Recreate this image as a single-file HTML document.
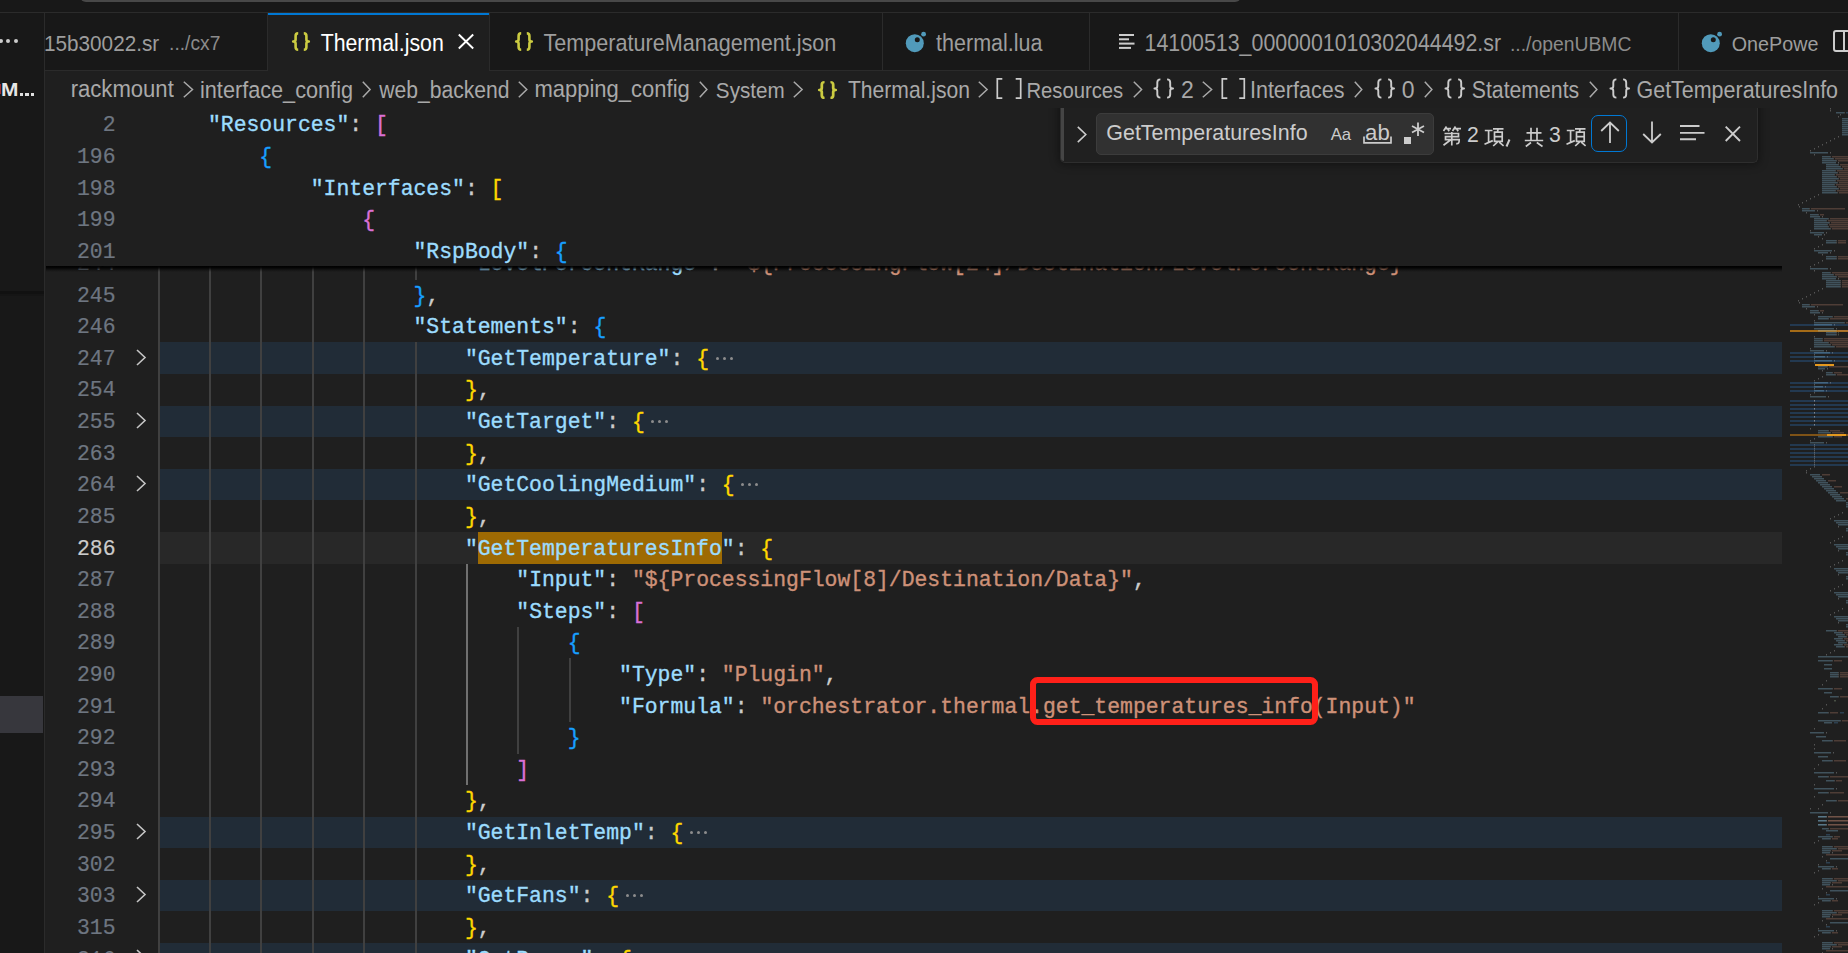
<!DOCTYPE html><html><head><meta charset="utf-8"><title>Thermal.json</title><style>
*{margin:0;padding:0;box-sizing:border-box}
html,body{width:1848px;height:953px;overflow:hidden;background:#1f1f1f}
body{position:relative;font-family:"Liberation Sans",sans-serif}
.a{position:absolute}
svg.a{overflow:visible}
.t{position:absolute;white-space:pre;font-family:"Liberation Sans",sans-serif}
.c{position:absolute;white-space:pre;font-family:"Liberation Mono",monospace;font-size:21.413px;-webkit-text-stroke:0.35px currentColor}
.ln{position:absolute;white-space:pre;font-family:"Liberation Mono",monospace;font-size:21.413px;text-align:right;width:60px;-webkit-text-stroke:0.2px currentColor}
</style></head><body>
<div class="a" style="left:0px;top:0px;width:1848px;height:12px;background:#181818;"></div>
<div class="a" style="left:80px;top:-20px;width:1161px;height:22px;background:#484848;border-radius:6px"></div>
<div class="a" style="left:0px;top:12px;width:1848px;height:1px;background:#2b2b2b;"></div>
<div class="a" style="left:0px;top:13px;width:44px;height:940px;background:#181818;"></div>
<div class="a" style="left:44px;top:13px;width:1px;height:940px;background:#2b2b2b;"></div>
<div class="a" style="left:-1.5px;top:39.4px;width:4px;height:4px;background:#cccccc;border-radius:2px"></div>
<div class="a" style="left:5.5px;top:39.4px;width:4px;height:4px;background:#cccccc;border-radius:2px"></div>
<div class="a" style="left:14px;top:39.4px;width:4px;height:4px;background:#cccccc;border-radius:2px"></div>
<div class="t" style="left:1.20px;top:70.06px;font-size:18.000px;line-height:40px;color:#e6e6e6;font-weight:bold;transform:scaleX(1.16);transform-origin:0 0;">M</div>
<div class="a" style="left:19.6px;top:92.6px;width:3.3px;height:3.4px;background:#e0e0e0;"></div>
<div class="a" style="left:25.3px;top:92.6px;width:3.3px;height:3.4px;background:#e0e0e0;"></div>
<div class="a" style="left:31.0px;top:92.6px;width:3.3px;height:3.4px;background:#e0e0e0;"></div>
<div class="a" style="left:0px;top:84px;width:1px;height:10px;background:#a02828;"></div>
<div class="a" style="left:0px;top:291px;width:44px;height:3px;background:#111111;"></div>
<div class="a" style="left:0px;top:294px;width:44px;height:2px;background:#151515;"></div>
<div class="a" style="left:0px;top:696px;width:43px;height:37px;background:#37373d;"></div>
<div class="a" style="left:45px;top:13px;width:1803px;height:57px;background:#181818;"></div>
<div class="a" style="left:45px;top:70px;width:1803px;height:1px;background:#2b2b2b;"></div>
<div class="a" style="left:268px;top:13px;width:221px;height:58px;background:#1f1f1f;"></div>
<div class="a" style="left:268px;top:13px;width:221px;height:2px;background:#0078d4;"></div>
<div class="a" style="left:267px;top:13px;width:1px;height:57px;background:#2b2b2b;"></div>
<div class="a" style="left:489px;top:13px;width:1px;height:57px;background:#2b2b2b;"></div>
<div class="a" style="left:882px;top:13px;width:1px;height:57px;background:#2b2b2b;"></div>
<div class="a" style="left:1089px;top:13px;width:1px;height:57px;background:#2b2b2b;"></div>
<div class="a" style="left:1678px;top:13px;width:1px;height:57px;background:#2b2b2b;"></div>
<div class="t" style="left:44.05px;top:23.82px;font-size:20.712px;line-height:40px;color:#9d9d9d;transform:scaleY(1.09);transform-origin:0 27.18px;">15b30022.sr</div>
<div class="t" style="left:169.07px;top:24.33px;font-size:19.249px;line-height:40px;color:#8b8b8b;transform:scaleY(1.09);transform-origin:0 26.67px;">.../cx7</div>
<svg class="a" style="left:291.5px;top:32px" width="18" height="19" viewBox="0 0 18 19" preserveAspectRatio="none"><path d="M6.2 1.2 C4.2 1.2 3.6 2.2 3.6 4 L3.6 7.4 C3.6 8.6 2.9 9.5 1.2 9.5 C2.9 9.5 3.6 10.4 3.6 11.6 L3.6 15 C3.6 16.8 4.2 17.8 6.2 17.8" fill="none" stroke="#cbcb41" stroke-width="2.6" stroke-linejoin="round"/><path d="M11.8 1.2 C13.8 1.2 14.4 2.2 14.4 4 L14.4 7.4 C14.4 8.6 15.1 9.5 16.8 9.5 C15.1 9.5 14.4 10.4 14.4 11.6 L14.4 15 C14.4 16.8 13.8 17.8 11.8 17.8" fill="none" stroke="#cbcb41" stroke-width="2.6" stroke-linejoin="round"/></svg>
<div class="t" style="left:320.67px;top:23.62px;font-size:21.301px;line-height:40px;color:#ffffff;transform:scaleY(1.09);transform-origin:0 27.38px;">Thermal.json</div>
<svg class="a" style="left:458px;top:34px" width="16" height="15" viewBox="0 0 16 15"><path d="M0.8 0.5 L15.2 14.5 M15.2 0.5 L0.8 14.5" stroke="#ffffff" stroke-width="1.9"/></svg>
<svg class="a" style="left:514.5px;top:32px" width="18" height="19" viewBox="0 0 18 19" preserveAspectRatio="none"><path d="M6.2 1.2 C4.2 1.2 3.6 2.2 3.6 4 L3.6 7.4 C3.6 8.6 2.9 9.5 1.2 9.5 C2.9 9.5 3.6 10.4 3.6 11.6 L3.6 15 C3.6 16.8 4.2 17.8 6.2 17.8" fill="none" stroke="#cbcb41" stroke-width="2.6" stroke-linejoin="round"/><path d="M11.8 1.2 C13.8 1.2 14.4 2.2 14.4 4 L14.4 7.4 C14.4 8.6 15.1 9.5 16.8 9.5 C15.1 9.5 14.4 10.4 14.4 11.6 L14.4 15 C14.4 16.8 13.8 17.8 11.8 17.8" fill="none" stroke="#cbcb41" stroke-width="2.6" stroke-linejoin="round"/></svg>
<div class="t" style="left:543.57px;top:23.52px;font-size:21.588px;line-height:40px;color:#9d9d9d;transform:scaleY(1.09);transform-origin:0 27.48px;">TemperatureManagement.json</div>
<svg class="a" style="left:904.5px;top:30.5px" width="22" height="22" viewBox="0 0 22 22"><circle cx="9.8" cy="12.2" r="9" fill="#519aba"/><circle cx="12.3" cy="8.8" r="2.5" fill="#181818"/><circle cx="18.6" cy="3.2" r="2.4" fill="#519aba"/></svg>
<div class="t" style="left:936.08px;top:23.54px;font-size:21.518px;line-height:40px;color:#9d9d9d;transform:scaleY(1.09);transform-origin:0 27.46px;">thermal.lua</div>
<svg class="a" style="left:1119px;top:34px" width="16" height="16" viewBox="0 0 16 16"><g fill="#cccccc"><rect x="0" y="0" width="15" height="2"/><rect x="0" y="4.3" width="10" height="2"/><rect x="0" y="8.6" width="15.5" height="2"/><rect x="0" y="12.9" width="12" height="2"/></g></svg>
<div class="t" style="left:1144.50px;top:23.59px;font-size:21.386px;line-height:40px;color:#9d9d9d;transform:scaleY(1.09);transform-origin:0 27.41px;">14100513_0000001010302044492.sr</div>
<div class="t" style="left:1509.96px;top:24.30px;font-size:19.350px;line-height:40px;color:#8b8b8b;transform:scaleY(1.09);transform-origin:0 26.70px;">.../openUBMC</div>
<svg class="a" style="left:1701px;top:30.5px" width="22" height="22" viewBox="0 0 22 22"><circle cx="9.8" cy="12.2" r="9" fill="#519aba"/><circle cx="12.3" cy="8.8" r="2.5" fill="#181818"/><circle cx="18.6" cy="3.2" r="2.4" fill="#519aba"/></svg>
<div class="a" style="left:1680px;top:13px;width:138.5px;height:57px;overflow:hidden">
<div class="t" style="left:51.71px;top:11.16px;font-size:19.745px;line-height:40px;color:#9d9d9d;">OnePower</div>
</div>
<div class="a" style="left:1833.4px;top:30px;width:24px;height:21.5px;border:2px solid #cccccc;border-radius:3px"></div>
<div class="a" style="left:1843px;top:30px;width:2px;height:21.5px;background:#cccccc;"></div>
<div class="t" style="left:70.67px;top:70.44px;font-size:22.109px;line-height:40px;color:#a9a9a9;transform:scaleY(1.09);transform-origin:0 27.66px;">rackmount</div>
<svg class="a" style="left:183.4px;top:80.5px" width="10.400000000000006" height="17.0" viewBox="0 0 10.400000000000006 17.0"><path d="M0.8 0.8 L9.500000000000005 8.5 L0.8 16.2" fill="none" stroke="#a9a9a9" stroke-width="1.5"/></svg>
<div class="t" style="left:200.00px;top:70.58px;font-size:21.688px;line-height:40px;color:#a9a9a9;transform:scaleY(1.09);transform-origin:0 27.52px;">interface_config</div>
<svg class="a" style="left:362px;top:80.5px" width="9" height="17.0" viewBox="0 0 9 17.0"><path d="M0.8 0.8 L8.1 8.5 L0.8 16.2" fill="none" stroke="#a9a9a9" stroke-width="1.5"/></svg>
<div class="t" style="left:379.20px;top:70.78px;font-size:21.115px;line-height:40px;color:#a9a9a9;transform:scaleY(1.09);transform-origin:0 27.32px;">web_backend</div>
<svg class="a" style="left:517.9px;top:80.5px" width="9.700000000000045" height="17.0" viewBox="0 0 9.700000000000045 17.0"><path d="M0.8 0.8 L8.800000000000045 8.5 L0.8 16.2" fill="none" stroke="#a9a9a9" stroke-width="1.5"/></svg>
<div class="t" style="left:534.38px;top:70.47px;font-size:22.020px;line-height:40px;color:#a9a9a9;transform:scaleY(1.09);transform-origin:0 27.63px;">mapping_config</div>
<svg class="a" style="left:699px;top:80.5px" width="8.799999999999955" height="17.0" viewBox="0 0 8.799999999999955 17.0"><path d="M0.8 0.8 L7.899999999999954 8.5 L0.8 16.2" fill="none" stroke="#a9a9a9" stroke-width="1.5"/></svg>
<div class="t" style="left:715.87px;top:70.94px;font-size:20.652px;line-height:40px;color:#a9a9a9;transform:scaleY(1.09);transform-origin:0 27.16px;">System</div>
<svg class="a" style="left:793px;top:80.5px" width="10" height="17.0" viewBox="0 0 10 17.0"><path d="M0.8 0.8 L9.1 8.5 L0.8 16.2" fill="none" stroke="#a9a9a9" stroke-width="1.5"/></svg>
<svg class="a" style="left:818px;top:80.5px" width="19" height="18" viewBox="0 0 18 19" preserveAspectRatio="none"><path d="M6.2 1.2 C4.2 1.2 3.6 2.2 3.6 4 L3.6 7.4 C3.6 8.6 2.9 9.5 1.2 9.5 C2.9 9.5 3.6 10.4 3.6 11.6 L3.6 15 C3.6 16.8 4.2 17.8 6.2 17.8" fill="none" stroke="#cbcb41" stroke-width="2.6" stroke-linejoin="round"/><path d="M11.8 1.2 C13.8 1.2 14.4 2.2 14.4 4 L14.4 7.4 C14.4 8.6 15.1 9.5 16.8 9.5 C15.1 9.5 14.4 10.4 14.4 11.6 L14.4 15 C14.4 16.8 13.8 17.8 11.8 17.8" fill="none" stroke="#cbcb41" stroke-width="2.6" stroke-linejoin="round"/></svg>
<div class="t" style="left:847.98px;top:70.79px;font-size:21.107px;line-height:40px;color:#a9a9a9;transform:scaleY(1.09);transform-origin:0 27.31px;">Thermal.json</div>
<svg class="a" style="left:978px;top:80.5px" width="10" height="17.0" viewBox="0 0 10 17.0"><path d="M0.8 0.8 L9.1 8.5 L0.8 16.2" fill="none" stroke="#a9a9a9" stroke-width="1.5"/></svg>
<svg class="a" style="left:996px;top:78px" width="26" height="21" viewBox="0 0 26 21"><path d="M6.3 0.9 H1.3 V20.1 H6.3 M19.7 0.9 H24.7 V20.1 H19.7" fill="none" stroke="#cccccc" stroke-width="1.7"/></svg>
<div class="t" style="left:1026.38px;top:71.07px;font-size:20.278px;line-height:40px;color:#a9a9a9;transform:scaleY(1.09);transform-origin:0 27.03px;">Resources</div>
<svg class="a" style="left:1132.5px;top:80.5px" width="9.5" height="17.0" viewBox="0 0 9.5 17.0"><path d="M0.8 0.8 L8.6 8.5 L0.8 16.2" fill="none" stroke="#a9a9a9" stroke-width="1.5"/></svg>
<svg class="a" style="left:1152.5px;top:78px" width="21.5" height="21" viewBox="0 0 18 19" preserveAspectRatio="none"><path d="M6.2 1.2 C4.2 1.2 3.6 2.2 3.6 4 L3.6 7.4 C3.6 8.6 2.9 9.5 1.2 9.5 C2.9 9.5 3.6 10.4 3.6 11.6 L3.6 15 C3.6 16.8 4.2 17.8 6.2 17.8" fill="none" stroke="#cccccc" stroke-width="1.6" stroke-linejoin="round"/><path d="M11.8 1.2 C13.8 1.2 14.4 2.2 14.4 4 L14.4 7.4 C14.4 8.6 15.1 9.5 16.8 9.5 C15.1 9.5 14.4 10.4 14.4 11.6 L14.4 15 C14.4 16.8 13.8 17.8 11.8 17.8" fill="none" stroke="#cccccc" stroke-width="1.6" stroke-linejoin="round"/></svg>
<div class="t" style="left:1181.00px;top:70.33px;font-size:23.000px;line-height:40px;color:#a9a9a9;">2</div>
<svg class="a" style="left:1201.75px;top:80.5px" width="10.549999999999955" height="17.0" viewBox="0 0 10.549999999999955 17.0"><path d="M0.8 0.8 L9.649999999999954 8.5 L0.8 16.2" fill="none" stroke="#a9a9a9" stroke-width="1.5"/></svg>
<svg class="a" style="left:1221px;top:78px" width="24.59999999999991" height="21" viewBox="0 0 24.59999999999991 21"><path d="M6.3 0.9 H1.3 V20.1 H6.3 M18.29999999999991 0.9 H23.29999999999991 V20.1 H18.29999999999991" fill="none" stroke="#cccccc" stroke-width="1.7"/></svg>
<div class="t" style="left:1249.96px;top:70.64px;font-size:21.522px;line-height:40px;color:#a9a9a9;transform:scaleY(1.09);transform-origin:0 27.46px;">Interfaces</div>
<svg class="a" style="left:1354.3px;top:80.5px" width="8.700000000000045" height="17.0" viewBox="0 0 8.700000000000045 17.0"><path d="M0.8 0.8 L7.800000000000045 8.5 L0.8 16.2" fill="none" stroke="#a9a9a9" stroke-width="1.5"/></svg>
<svg class="a" style="left:1373.6px;top:78px" width="21.5" height="21" viewBox="0 0 18 19" preserveAspectRatio="none"><path d="M6.2 1.2 C4.2 1.2 3.6 2.2 3.6 4 L3.6 7.4 C3.6 8.6 2.9 9.5 1.2 9.5 C2.9 9.5 3.6 10.4 3.6 11.6 L3.6 15 C3.6 16.8 4.2 17.8 6.2 17.8" fill="none" stroke="#cccccc" stroke-width="1.6" stroke-linejoin="round"/><path d="M11.8 1.2 C13.8 1.2 14.4 2.2 14.4 4 L14.4 7.4 C14.4 8.6 15.1 9.5 16.8 9.5 C15.1 9.5 14.4 10.4 14.4 11.6 L14.4 15 C14.4 16.8 13.8 17.8 11.8 17.8" fill="none" stroke="#cccccc" stroke-width="1.6" stroke-linejoin="round"/></svg>
<div class="t" style="left:1401.80px;top:70.33px;font-size:23.000px;line-height:40px;color:#a9a9a9;">0</div>
<svg class="a" style="left:1424.4px;top:80.5px" width="8.799999999999955" height="17.0" viewBox="0 0 8.799999999999955 17.0"><path d="M0.8 0.8 L7.899999999999954 8.5 L0.8 16.2" fill="none" stroke="#a9a9a9" stroke-width="1.5"/></svg>
<svg class="a" style="left:1443.7px;top:78px" width="21.5" height="21" viewBox="0 0 18 19" preserveAspectRatio="none"><path d="M6.2 1.2 C4.2 1.2 3.6 2.2 3.6 4 L3.6 7.4 C3.6 8.6 2.9 9.5 1.2 9.5 C2.9 9.5 3.6 10.4 3.6 11.6 L3.6 15 C3.6 16.8 4.2 17.8 6.2 17.8" fill="none" stroke="#cccccc" stroke-width="1.6" stroke-linejoin="round"/><path d="M11.8 1.2 C13.8 1.2 14.4 2.2 14.4 4 L14.4 7.4 C14.4 8.6 15.1 9.5 16.8 9.5 C15.1 9.5 14.4 10.4 14.4 11.6 L14.4 15 C14.4 16.8 13.8 17.8 11.8 17.8" fill="none" stroke="#cccccc" stroke-width="1.6" stroke-linejoin="round"/></svg>
<div class="t" style="left:1471.74px;top:70.73px;font-size:21.265px;line-height:40px;color:#a9a9a9;transform:scaleY(1.09);transform-origin:0 27.37px;">Statements</div>
<svg class="a" style="left:1589.2px;top:80.5px" width="8.799999999999955" height="17.0" viewBox="0 0 8.799999999999955 17.0"><path d="M0.8 0.8 L7.899999999999954 8.5 L0.8 16.2" fill="none" stroke="#a9a9a9" stroke-width="1.5"/></svg>
<svg class="a" style="left:1608.5px;top:78px" width="21.5" height="21" viewBox="0 0 18 19" preserveAspectRatio="none"><path d="M6.2 1.2 C4.2 1.2 3.6 2.2 3.6 4 L3.6 7.4 C3.6 8.6 2.9 9.5 1.2 9.5 C2.9 9.5 3.6 10.4 3.6 11.6 L3.6 15 C3.6 16.8 4.2 17.8 6.2 17.8" fill="none" stroke="#cccccc" stroke-width="1.6" stroke-linejoin="round"/><path d="M11.8 1.2 C13.8 1.2 14.4 2.2 14.4 4 L14.4 7.4 C14.4 8.6 15.1 9.5 16.8 9.5 C15.1 9.5 14.4 10.4 14.4 11.6 L14.4 15 C14.4 16.8 13.8 17.8 11.8 17.8" fill="none" stroke="#cccccc" stroke-width="1.6" stroke-linejoin="round"/></svg>
<div class="t" style="left:1636.53px;top:70.66px;font-size:21.461px;line-height:40px;color:#a9a9a9;transform:scaleY(1.09);transform-origin:0 27.44px;">GetTemperaturesInfo</div>
<div class="a" style="left:158px;top:342.33px;width:1624px;height:31.61px;background:#212c37;"></div>
<div class="a" style="left:158px;top:405.56px;width:1624px;height:31.61px;background:#212c37;"></div>
<div class="a" style="left:158px;top:468.79px;width:1624px;height:31.61px;background:#212c37;"></div>
<div class="a" style="left:158px;top:532.02px;width:1624px;height:31.61px;background:#282828;"></div>
<div class="a" style="left:477.75px;top:532.02px;width:244.07px;height:31.61px;background:#9e6a03;"></div>
<div class="a" style="left:158px;top:816.55px;width:1624px;height:31.61px;background:#212c37;"></div>
<div class="a" style="left:158px;top:879.78px;width:1624px;height:31.61px;background:#212c37;"></div>
<div class="a" style="left:158px;top:943.01px;width:1624px;height:31.61px;background:#212c37;"></div>
<div class="a" style="left:157.60px;top:247.49px;width:2px;height:32.11px;background:#404040;"></div>
<div class="a" style="left:208.98px;top:247.49px;width:2px;height:32.11px;background:#404040;"></div>
<div class="a" style="left:260.37px;top:247.49px;width:2px;height:32.11px;background:#404040;"></div>
<div class="a" style="left:311.75px;top:247.49px;width:2px;height:32.11px;background:#404040;"></div>
<div class="a" style="left:363.14px;top:247.49px;width:2px;height:32.11px;background:#404040;"></div>
<div class="a" style="left:414.52px;top:247.49px;width:2px;height:32.11px;background:#404040;"></div>
<div class="a" style="left:157.60px;top:279.10px;width:2px;height:32.11px;background:#404040;"></div>
<div class="a" style="left:208.98px;top:279.10px;width:2px;height:32.11px;background:#404040;"></div>
<div class="a" style="left:260.37px;top:279.10px;width:2px;height:32.11px;background:#404040;"></div>
<div class="a" style="left:311.75px;top:279.10px;width:2px;height:32.11px;background:#404040;"></div>
<div class="a" style="left:363.14px;top:279.10px;width:2px;height:32.11px;background:#404040;"></div>
<div class="a" style="left:157.60px;top:310.72px;width:2px;height:32.11px;background:#404040;"></div>
<div class="a" style="left:208.98px;top:310.72px;width:2px;height:32.11px;background:#404040;"></div>
<div class="a" style="left:260.37px;top:310.72px;width:2px;height:32.11px;background:#404040;"></div>
<div class="a" style="left:311.75px;top:310.72px;width:2px;height:32.11px;background:#404040;"></div>
<div class="a" style="left:363.14px;top:310.72px;width:2px;height:32.11px;background:#404040;"></div>
<div class="a" style="left:157.60px;top:342.33px;width:2px;height:32.11px;background:#404040;"></div>
<div class="a" style="left:208.98px;top:342.33px;width:2px;height:32.11px;background:#404040;"></div>
<div class="a" style="left:260.37px;top:342.33px;width:2px;height:32.11px;background:#404040;"></div>
<div class="a" style="left:311.75px;top:342.33px;width:2px;height:32.11px;background:#404040;"></div>
<div class="a" style="left:363.14px;top:342.33px;width:2px;height:32.11px;background:#404040;"></div>
<div class="a" style="left:414.52px;top:342.33px;width:2px;height:32.11px;background:#404040;"></div>
<div class="a" style="left:157.60px;top:373.95px;width:2px;height:32.11px;background:#404040;"></div>
<div class="a" style="left:208.98px;top:373.95px;width:2px;height:32.11px;background:#404040;"></div>
<div class="a" style="left:260.37px;top:373.95px;width:2px;height:32.11px;background:#404040;"></div>
<div class="a" style="left:311.75px;top:373.95px;width:2px;height:32.11px;background:#404040;"></div>
<div class="a" style="left:363.14px;top:373.95px;width:2px;height:32.11px;background:#404040;"></div>
<div class="a" style="left:414.52px;top:373.95px;width:2px;height:32.11px;background:#404040;"></div>
<div class="a" style="left:157.60px;top:405.56px;width:2px;height:32.11px;background:#404040;"></div>
<div class="a" style="left:208.98px;top:405.56px;width:2px;height:32.11px;background:#404040;"></div>
<div class="a" style="left:260.37px;top:405.56px;width:2px;height:32.11px;background:#404040;"></div>
<div class="a" style="left:311.75px;top:405.56px;width:2px;height:32.11px;background:#404040;"></div>
<div class="a" style="left:363.14px;top:405.56px;width:2px;height:32.11px;background:#404040;"></div>
<div class="a" style="left:414.52px;top:405.56px;width:2px;height:32.11px;background:#404040;"></div>
<div class="a" style="left:157.60px;top:437.18px;width:2px;height:32.11px;background:#404040;"></div>
<div class="a" style="left:208.98px;top:437.18px;width:2px;height:32.11px;background:#404040;"></div>
<div class="a" style="left:260.37px;top:437.18px;width:2px;height:32.11px;background:#404040;"></div>
<div class="a" style="left:311.75px;top:437.18px;width:2px;height:32.11px;background:#404040;"></div>
<div class="a" style="left:363.14px;top:437.18px;width:2px;height:32.11px;background:#404040;"></div>
<div class="a" style="left:414.52px;top:437.18px;width:2px;height:32.11px;background:#404040;"></div>
<div class="a" style="left:157.60px;top:468.79px;width:2px;height:32.11px;background:#404040;"></div>
<div class="a" style="left:208.98px;top:468.79px;width:2px;height:32.11px;background:#404040;"></div>
<div class="a" style="left:260.37px;top:468.79px;width:2px;height:32.11px;background:#404040;"></div>
<div class="a" style="left:311.75px;top:468.79px;width:2px;height:32.11px;background:#404040;"></div>
<div class="a" style="left:363.14px;top:468.79px;width:2px;height:32.11px;background:#404040;"></div>
<div class="a" style="left:414.52px;top:468.79px;width:2px;height:32.11px;background:#404040;"></div>
<div class="a" style="left:157.60px;top:500.40px;width:2px;height:32.11px;background:#404040;"></div>
<div class="a" style="left:208.98px;top:500.40px;width:2px;height:32.11px;background:#404040;"></div>
<div class="a" style="left:260.37px;top:500.40px;width:2px;height:32.11px;background:#404040;"></div>
<div class="a" style="left:311.75px;top:500.40px;width:2px;height:32.11px;background:#404040;"></div>
<div class="a" style="left:363.14px;top:500.40px;width:2px;height:32.11px;background:#404040;"></div>
<div class="a" style="left:414.52px;top:500.40px;width:2px;height:32.11px;background:#404040;"></div>
<div class="a" style="left:157.60px;top:532.02px;width:2px;height:32.11px;background:#404040;"></div>
<div class="a" style="left:208.98px;top:532.02px;width:2px;height:32.11px;background:#404040;"></div>
<div class="a" style="left:260.37px;top:532.02px;width:2px;height:32.11px;background:#404040;"></div>
<div class="a" style="left:311.75px;top:532.02px;width:2px;height:32.11px;background:#404040;"></div>
<div class="a" style="left:363.14px;top:532.02px;width:2px;height:32.11px;background:#404040;"></div>
<div class="a" style="left:414.52px;top:532.02px;width:2px;height:32.11px;background:#404040;"></div>
<div class="a" style="left:157.60px;top:563.63px;width:2px;height:32.11px;background:#404040;"></div>
<div class="a" style="left:208.98px;top:563.63px;width:2px;height:32.11px;background:#404040;"></div>
<div class="a" style="left:260.37px;top:563.63px;width:2px;height:32.11px;background:#404040;"></div>
<div class="a" style="left:311.75px;top:563.63px;width:2px;height:32.11px;background:#404040;"></div>
<div class="a" style="left:363.14px;top:563.63px;width:2px;height:32.11px;background:#404040;"></div>
<div class="a" style="left:414.52px;top:563.63px;width:2px;height:32.11px;background:#404040;"></div>
<div class="a" style="left:465.90px;top:563.63px;width:2px;height:32.11px;background:#707070;"></div>
<div class="a" style="left:157.60px;top:595.25px;width:2px;height:32.11px;background:#404040;"></div>
<div class="a" style="left:208.98px;top:595.25px;width:2px;height:32.11px;background:#404040;"></div>
<div class="a" style="left:260.37px;top:595.25px;width:2px;height:32.11px;background:#404040;"></div>
<div class="a" style="left:311.75px;top:595.25px;width:2px;height:32.11px;background:#404040;"></div>
<div class="a" style="left:363.14px;top:595.25px;width:2px;height:32.11px;background:#404040;"></div>
<div class="a" style="left:414.52px;top:595.25px;width:2px;height:32.11px;background:#404040;"></div>
<div class="a" style="left:465.90px;top:595.25px;width:2px;height:32.11px;background:#707070;"></div>
<div class="a" style="left:157.60px;top:626.87px;width:2px;height:32.11px;background:#404040;"></div>
<div class="a" style="left:208.98px;top:626.87px;width:2px;height:32.11px;background:#404040;"></div>
<div class="a" style="left:260.37px;top:626.87px;width:2px;height:32.11px;background:#404040;"></div>
<div class="a" style="left:311.75px;top:626.87px;width:2px;height:32.11px;background:#404040;"></div>
<div class="a" style="left:363.14px;top:626.87px;width:2px;height:32.11px;background:#404040;"></div>
<div class="a" style="left:414.52px;top:626.87px;width:2px;height:32.11px;background:#404040;"></div>
<div class="a" style="left:465.90px;top:626.87px;width:2px;height:32.11px;background:#707070;"></div>
<div class="a" style="left:517.29px;top:626.87px;width:2px;height:32.11px;background:#404040;"></div>
<div class="a" style="left:157.60px;top:658.48px;width:2px;height:32.11px;background:#404040;"></div>
<div class="a" style="left:208.98px;top:658.48px;width:2px;height:32.11px;background:#404040;"></div>
<div class="a" style="left:260.37px;top:658.48px;width:2px;height:32.11px;background:#404040;"></div>
<div class="a" style="left:311.75px;top:658.48px;width:2px;height:32.11px;background:#404040;"></div>
<div class="a" style="left:363.14px;top:658.48px;width:2px;height:32.11px;background:#404040;"></div>
<div class="a" style="left:414.52px;top:658.48px;width:2px;height:32.11px;background:#404040;"></div>
<div class="a" style="left:465.90px;top:658.48px;width:2px;height:32.11px;background:#707070;"></div>
<div class="a" style="left:517.29px;top:658.48px;width:2px;height:32.11px;background:#404040;"></div>
<div class="a" style="left:568.67px;top:658.48px;width:2px;height:32.11px;background:#404040;"></div>
<div class="a" style="left:157.60px;top:690.10px;width:2px;height:32.11px;background:#404040;"></div>
<div class="a" style="left:208.98px;top:690.10px;width:2px;height:32.11px;background:#404040;"></div>
<div class="a" style="left:260.37px;top:690.10px;width:2px;height:32.11px;background:#404040;"></div>
<div class="a" style="left:311.75px;top:690.10px;width:2px;height:32.11px;background:#404040;"></div>
<div class="a" style="left:363.14px;top:690.10px;width:2px;height:32.11px;background:#404040;"></div>
<div class="a" style="left:414.52px;top:690.10px;width:2px;height:32.11px;background:#404040;"></div>
<div class="a" style="left:465.90px;top:690.10px;width:2px;height:32.11px;background:#707070;"></div>
<div class="a" style="left:517.29px;top:690.10px;width:2px;height:32.11px;background:#404040;"></div>
<div class="a" style="left:568.67px;top:690.10px;width:2px;height:32.11px;background:#404040;"></div>
<div class="a" style="left:157.60px;top:721.71px;width:2px;height:32.11px;background:#404040;"></div>
<div class="a" style="left:208.98px;top:721.71px;width:2px;height:32.11px;background:#404040;"></div>
<div class="a" style="left:260.37px;top:721.71px;width:2px;height:32.11px;background:#404040;"></div>
<div class="a" style="left:311.75px;top:721.71px;width:2px;height:32.11px;background:#404040;"></div>
<div class="a" style="left:363.14px;top:721.71px;width:2px;height:32.11px;background:#404040;"></div>
<div class="a" style="left:414.52px;top:721.71px;width:2px;height:32.11px;background:#404040;"></div>
<div class="a" style="left:465.90px;top:721.71px;width:2px;height:32.11px;background:#707070;"></div>
<div class="a" style="left:517.29px;top:721.71px;width:2px;height:32.11px;background:#404040;"></div>
<div class="a" style="left:157.60px;top:753.33px;width:2px;height:32.11px;background:#404040;"></div>
<div class="a" style="left:208.98px;top:753.33px;width:2px;height:32.11px;background:#404040;"></div>
<div class="a" style="left:260.37px;top:753.33px;width:2px;height:32.11px;background:#404040;"></div>
<div class="a" style="left:311.75px;top:753.33px;width:2px;height:32.11px;background:#404040;"></div>
<div class="a" style="left:363.14px;top:753.33px;width:2px;height:32.11px;background:#404040;"></div>
<div class="a" style="left:414.52px;top:753.33px;width:2px;height:32.11px;background:#404040;"></div>
<div class="a" style="left:465.90px;top:753.33px;width:2px;height:32.11px;background:#707070;"></div>
<div class="a" style="left:157.60px;top:784.94px;width:2px;height:32.11px;background:#404040;"></div>
<div class="a" style="left:208.98px;top:784.94px;width:2px;height:32.11px;background:#404040;"></div>
<div class="a" style="left:260.37px;top:784.94px;width:2px;height:32.11px;background:#404040;"></div>
<div class="a" style="left:311.75px;top:784.94px;width:2px;height:32.11px;background:#404040;"></div>
<div class="a" style="left:363.14px;top:784.94px;width:2px;height:32.11px;background:#404040;"></div>
<div class="a" style="left:414.52px;top:784.94px;width:2px;height:32.11px;background:#404040;"></div>
<div class="a" style="left:157.60px;top:816.55px;width:2px;height:32.11px;background:#404040;"></div>
<div class="a" style="left:208.98px;top:816.55px;width:2px;height:32.11px;background:#404040;"></div>
<div class="a" style="left:260.37px;top:816.55px;width:2px;height:32.11px;background:#404040;"></div>
<div class="a" style="left:311.75px;top:816.55px;width:2px;height:32.11px;background:#404040;"></div>
<div class="a" style="left:363.14px;top:816.55px;width:2px;height:32.11px;background:#404040;"></div>
<div class="a" style="left:414.52px;top:816.55px;width:2px;height:32.11px;background:#404040;"></div>
<div class="a" style="left:157.60px;top:848.17px;width:2px;height:32.11px;background:#404040;"></div>
<div class="a" style="left:208.98px;top:848.17px;width:2px;height:32.11px;background:#404040;"></div>
<div class="a" style="left:260.37px;top:848.17px;width:2px;height:32.11px;background:#404040;"></div>
<div class="a" style="left:311.75px;top:848.17px;width:2px;height:32.11px;background:#404040;"></div>
<div class="a" style="left:363.14px;top:848.17px;width:2px;height:32.11px;background:#404040;"></div>
<div class="a" style="left:414.52px;top:848.17px;width:2px;height:32.11px;background:#404040;"></div>
<div class="a" style="left:157.60px;top:879.78px;width:2px;height:32.11px;background:#404040;"></div>
<div class="a" style="left:208.98px;top:879.78px;width:2px;height:32.11px;background:#404040;"></div>
<div class="a" style="left:260.37px;top:879.78px;width:2px;height:32.11px;background:#404040;"></div>
<div class="a" style="left:311.75px;top:879.78px;width:2px;height:32.11px;background:#404040;"></div>
<div class="a" style="left:363.14px;top:879.78px;width:2px;height:32.11px;background:#404040;"></div>
<div class="a" style="left:414.52px;top:879.78px;width:2px;height:32.11px;background:#404040;"></div>
<div class="a" style="left:157.60px;top:911.40px;width:2px;height:32.11px;background:#404040;"></div>
<div class="a" style="left:208.98px;top:911.40px;width:2px;height:32.11px;background:#404040;"></div>
<div class="a" style="left:260.37px;top:911.40px;width:2px;height:32.11px;background:#404040;"></div>
<div class="a" style="left:311.75px;top:911.40px;width:2px;height:32.11px;background:#404040;"></div>
<div class="a" style="left:363.14px;top:911.40px;width:2px;height:32.11px;background:#404040;"></div>
<div class="a" style="left:414.52px;top:911.40px;width:2px;height:32.11px;background:#404040;"></div>
<div class="a" style="left:157.60px;top:943.01px;width:2px;height:32.11px;background:#404040;"></div>
<div class="a" style="left:208.98px;top:943.01px;width:2px;height:32.11px;background:#404040;"></div>
<div class="a" style="left:260.37px;top:943.01px;width:2px;height:32.11px;background:#404040;"></div>
<div class="a" style="left:311.75px;top:943.01px;width:2px;height:32.11px;background:#404040;"></div>
<div class="a" style="left:363.14px;top:943.01px;width:2px;height:32.11px;background:#404040;"></div>
<div class="a" style="left:414.52px;top:943.01px;width:2px;height:32.11px;background:#404040;"></div>
<div class="c" style="left:464.90px;top:248.97px;line-height:31.615px;"><span style="color:#9cdcfe">&quot;LevelPercentRange&quot;</span><span style="color:#cccccc">: </span><span style="color:#ce9178">&quot;${ProcessingFlow[24]/Destination/LevelPercentRange}&quot;</span></div>
<div class="ln" style="left:55.5px;top:248.97px;line-height:31.615px;color:#6e7681">244</div>
<div class="c" style="left:413.52px;top:280.59px;line-height:31.615px;"><span style="color:#179fff">}</span><span style="color:#cccccc">,</span></div>
<div class="ln" style="left:55.5px;top:280.59px;line-height:31.615px;color:#6e7681">245</div>
<div class="c" style="left:413.52px;top:312.20px;line-height:31.615px;"><span style="color:#9cdcfe">&quot;Statements&quot;</span><span style="color:#cccccc">: </span><span style="color:#179fff">{</span></div>
<div class="ln" style="left:55.5px;top:312.20px;line-height:31.615px;color:#6e7681">246</div>
<div class="c" style="left:464.90px;top:343.82px;line-height:31.615px;"><span style="color:#9cdcfe">&quot;GetTemperature&quot;</span><span style="color:#cccccc">: </span><span style="color:#ffd700">{</span></div>
<div class="ln" style="left:55.5px;top:343.82px;line-height:31.615px;color:#6e7681">247</div>
<svg class="a" style="left:136px;top:348.53px" width="10" height="17" viewBox="0 0 10 17"><path d="M1 1 L9 8.5 L1 16" fill="none" stroke="#c5c5c5" stroke-width="1.6"/></svg>
<div class="a" style="left:715.58px;top:356.93px;width:3px;height:3px;background:#8c8c8c;border-radius:1.5px"></div>
<div class="a" style="left:722.58px;top:356.93px;width:3px;height:3px;background:#8c8c8c;border-radius:1.5px"></div>
<div class="a" style="left:729.58px;top:356.93px;width:3px;height:3px;background:#8c8c8c;border-radius:1.5px"></div>
<div class="c" style="left:464.90px;top:375.43px;line-height:31.615px;"><span style="color:#ffd700">}</span><span style="color:#cccccc">,</span></div>
<div class="ln" style="left:55.5px;top:375.43px;line-height:31.615px;color:#6e7681">254</div>
<div class="c" style="left:464.90px;top:407.05px;line-height:31.615px;"><span style="color:#9cdcfe">&quot;GetTarget&quot;</span><span style="color:#cccccc">: </span><span style="color:#ffd700">{</span></div>
<div class="ln" style="left:55.5px;top:407.05px;line-height:31.615px;color:#6e7681">255</div>
<svg class="a" style="left:136px;top:411.76px" width="10" height="17" viewBox="0 0 10 17"><path d="M1 1 L9 8.5 L1 16" fill="none" stroke="#c5c5c5" stroke-width="1.6"/></svg>
<div class="a" style="left:651.35px;top:420.16px;width:3px;height:3px;background:#8c8c8c;border-radius:1.5px"></div>
<div class="a" style="left:658.35px;top:420.16px;width:3px;height:3px;background:#8c8c8c;border-radius:1.5px"></div>
<div class="a" style="left:665.35px;top:420.16px;width:3px;height:3px;background:#8c8c8c;border-radius:1.5px"></div>
<div class="c" style="left:464.90px;top:438.66px;line-height:31.615px;"><span style="color:#ffd700">}</span><span style="color:#cccccc">,</span></div>
<div class="ln" style="left:55.5px;top:438.66px;line-height:31.615px;color:#6e7681">263</div>
<div class="c" style="left:464.90px;top:470.28px;line-height:31.615px;"><span style="color:#9cdcfe">&quot;GetCoolingMedium&quot;</span><span style="color:#cccccc">: </span><span style="color:#ffd700">{</span></div>
<div class="ln" style="left:55.5px;top:470.28px;line-height:31.615px;color:#6e7681">264</div>
<svg class="a" style="left:136px;top:474.99px" width="10" height="17" viewBox="0 0 10 17"><path d="M1 1 L9 8.5 L1 16" fill="none" stroke="#c5c5c5" stroke-width="1.6"/></svg>
<div class="a" style="left:741.27px;top:483.39px;width:3px;height:3px;background:#8c8c8c;border-radius:1.5px"></div>
<div class="a" style="left:748.27px;top:483.39px;width:3px;height:3px;background:#8c8c8c;border-radius:1.5px"></div>
<div class="a" style="left:755.27px;top:483.39px;width:3px;height:3px;background:#8c8c8c;border-radius:1.5px"></div>
<div class="c" style="left:464.90px;top:501.89px;line-height:31.615px;"><span style="color:#ffd700">}</span><span style="color:#cccccc">,</span></div>
<div class="ln" style="left:55.5px;top:501.89px;line-height:31.615px;color:#6e7681">285</div>
<div class="c" style="left:464.90px;top:533.51px;line-height:31.615px;"><span style="color:#9cdcfe">&quot;GetTemperaturesInfo&quot;</span><span style="color:#cccccc">: </span><span style="color:#ffd700">{</span></div>
<div class="ln" style="left:55.5px;top:533.51px;line-height:31.615px;color:#cccccc">286</div>
<div class="c" style="left:516.29px;top:565.12px;line-height:31.615px;"><span style="color:#9cdcfe">&quot;Input&quot;</span><span style="color:#cccccc">: </span><span style="color:#ce9178">&quot;${ProcessingFlow[8]/Destination/Data}&quot;</span><span style="color:#cccccc">,</span></div>
<div class="ln" style="left:55.5px;top:565.12px;line-height:31.615px;color:#6e7681">287</div>
<div class="c" style="left:516.29px;top:596.74px;line-height:31.615px;"><span style="color:#9cdcfe">&quot;Steps&quot;</span><span style="color:#cccccc">: </span><span style="color:#da70d6">[</span></div>
<div class="ln" style="left:55.5px;top:596.74px;line-height:31.615px;color:#6e7681">288</div>
<div class="c" style="left:567.67px;top:628.35px;line-height:31.615px;"><span style="color:#179fff">{</span></div>
<div class="ln" style="left:55.5px;top:628.35px;line-height:31.615px;color:#6e7681">289</div>
<div class="c" style="left:619.06px;top:659.97px;line-height:31.615px;"><span style="color:#9cdcfe">&quot;Type&quot;</span><span style="color:#cccccc">: </span><span style="color:#ce9178">&quot;Plugin&quot;</span><span style="color:#cccccc">,</span></div>
<div class="ln" style="left:55.5px;top:659.97px;line-height:31.615px;color:#6e7681">290</div>
<div class="c" style="left:619.06px;top:691.58px;line-height:31.615px;"><span style="color:#9cdcfe">&quot;Formula&quot;</span><span style="color:#cccccc">: </span><span style="color:#ce9178">&quot;orchestrator.thermal.get_temperatures_info(Input)&quot;</span></div>
<div class="ln" style="left:55.5px;top:691.58px;line-height:31.615px;color:#6e7681">291</div>
<div class="c" style="left:567.67px;top:723.20px;line-height:31.615px;"><span style="color:#179fff">}</span></div>
<div class="ln" style="left:55.5px;top:723.20px;line-height:31.615px;color:#6e7681">292</div>
<div class="c" style="left:516.29px;top:754.81px;line-height:31.615px;"><span style="color:#da70d6">]</span></div>
<div class="ln" style="left:55.5px;top:754.81px;line-height:31.615px;color:#6e7681">293</div>
<div class="c" style="left:464.90px;top:786.43px;line-height:31.615px;"><span style="color:#ffd700">}</span><span style="color:#cccccc">,</span></div>
<div class="ln" style="left:55.5px;top:786.43px;line-height:31.615px;color:#6e7681">294</div>
<div class="c" style="left:464.90px;top:818.04px;line-height:31.615px;"><span style="color:#9cdcfe">&quot;GetInletTemp&quot;</span><span style="color:#cccccc">: </span><span style="color:#ffd700">{</span></div>
<div class="ln" style="left:55.5px;top:818.04px;line-height:31.615px;color:#6e7681">295</div>
<svg class="a" style="left:136px;top:822.75px" width="10" height="17" viewBox="0 0 10 17"><path d="M1 1 L9 8.5 L1 16" fill="none" stroke="#c5c5c5" stroke-width="1.6"/></svg>
<div class="a" style="left:689.89px;top:831.15px;width:3px;height:3px;background:#8c8c8c;border-radius:1.5px"></div>
<div class="a" style="left:696.89px;top:831.15px;width:3px;height:3px;background:#8c8c8c;border-radius:1.5px"></div>
<div class="a" style="left:703.89px;top:831.15px;width:3px;height:3px;background:#8c8c8c;border-radius:1.5px"></div>
<div class="c" style="left:464.90px;top:849.66px;line-height:31.615px;"><span style="color:#ffd700">}</span><span style="color:#cccccc">,</span></div>
<div class="ln" style="left:55.5px;top:849.66px;line-height:31.615px;color:#6e7681">302</div>
<div class="c" style="left:464.90px;top:881.27px;line-height:31.615px;"><span style="color:#9cdcfe">&quot;GetFans&quot;</span><span style="color:#cccccc">: </span><span style="color:#ffd700">{</span></div>
<div class="ln" style="left:55.5px;top:881.27px;line-height:31.615px;color:#6e7681">303</div>
<svg class="a" style="left:136px;top:885.99px" width="10" height="17" viewBox="0 0 10 17"><path d="M1 1 L9 8.5 L1 16" fill="none" stroke="#c5c5c5" stroke-width="1.6"/></svg>
<div class="a" style="left:625.66px;top:894.38px;width:3px;height:3px;background:#8c8c8c;border-radius:1.5px"></div>
<div class="a" style="left:632.66px;top:894.38px;width:3px;height:3px;background:#8c8c8c;border-radius:1.5px"></div>
<div class="a" style="left:639.66px;top:894.38px;width:3px;height:3px;background:#8c8c8c;border-radius:1.5px"></div>
<div class="c" style="left:464.90px;top:912.89px;line-height:31.615px;"><span style="color:#ffd700">}</span><span style="color:#cccccc">,</span></div>
<div class="ln" style="left:55.5px;top:912.89px;line-height:31.615px;color:#6e7681">315</div>
<div class="c" style="left:464.90px;top:944.50px;line-height:31.615px;"><span style="color:#9cdcfe">&quot;GetPumps&quot;</span><span style="color:#cccccc">: </span><span style="color:#ffd700">{</span></div>
<div class="ln" style="left:55.5px;top:944.50px;line-height:31.615px;color:#6e7681">316</div>
<svg class="a" style="left:136px;top:949.22px" width="10" height="17" viewBox="0 0 10 17"><path d="M1 1 L9 8.5 L1 16" fill="none" stroke="#c5c5c5" stroke-width="1.6"/></svg>
<div class="a" style="left:638.50px;top:957.62px;width:3px;height:3px;background:#8c8c8c;border-radius:1.5px"></div>
<div class="a" style="left:645.50px;top:957.62px;width:3px;height:3px;background:#8c8c8c;border-radius:1.5px"></div>
<div class="a" style="left:652.50px;top:957.62px;width:3px;height:3px;background:#8c8c8c;border-radius:1.5px"></div>
<div class="a" style="left:1030.3px;top:677.3px;width:287.5px;height:47.3px;border:6px solid #ff2019;border-radius:7.5px"></div>
<div class="a" style="left:45px;top:108.0px;width:1737px;height:158.07px;background:#1f1f1f;"></div>
<div class="c" style="left:207.98px;top:110.29px;line-height:31.615px;"><span style="color:#9cdcfe">&quot;Resources&quot;</span><span style="color:#cccccc">: </span><span style="color:#da70d6">[</span></div>
<div class="ln" style="left:55.5px;top:110.29px;line-height:31.615px;color:#6e7681">2</div>
<div class="c" style="left:259.37px;top:141.90px;line-height:31.615px;"><span style="color:#179fff">{</span></div>
<div class="ln" style="left:55.5px;top:141.90px;line-height:31.615px;color:#6e7681">196</div>
<div class="c" style="left:310.75px;top:173.52px;line-height:31.615px;"><span style="color:#9cdcfe">&quot;Interfaces&quot;</span><span style="color:#cccccc">: </span><span style="color:#ffd700">[</span></div>
<div class="ln" style="left:55.5px;top:173.52px;line-height:31.615px;color:#6e7681">198</div>
<div class="c" style="left:362.14px;top:205.13px;line-height:31.615px;"><span style="color:#da70d6">{</span></div>
<div class="ln" style="left:55.5px;top:205.13px;line-height:31.615px;color:#6e7681">199</div>
<div class="c" style="left:413.52px;top:236.75px;line-height:31.615px;"><span style="color:#9cdcfe">&quot;RspBody&quot;</span><span style="color:#cccccc">: </span><span style="color:#179fff">{</span></div>
<div class="ln" style="left:55.5px;top:236.75px;line-height:31.615px;color:#6e7681">201</div>
<div class="a" style="left:46px;top:266px;width:1736px;height:6px;background:linear-gradient(to bottom, rgba(0,0,0,1) 0%, rgba(0,0,0,0.85) 30%, rgba(0,0,0,0.35) 65%, rgba(0,0,0,0) 100%)"></div>
<div class="a" style="left:1040px;top:108px;width:740px;height:80px;overflow:hidden"><div class="a" style="left:20px;top:-10px;width:698px;height:65px;background:#202020;border:1px solid #2e2e2e;border-top:none;border-radius:0 0 5px 5px;box-shadow:0 0 8px 2px rgba(0,0,0,0.36)"></div></div>
<div class="a" style="left:1060.5px;top:108px;width:3.5px;height:53px;background:#454545;border-radius:0 0 0 3px"></div>
<svg class="a" style="left:1077px;top:126px" width="9.700000000000045" height="17" viewBox="0 0 9.700000000000045 17"><path d="M0.8 0.8 L8.800000000000045 8.5 L0.8 16.2" fill="none" stroke="#cccccc" stroke-width="1.6"/></svg>
<div class="a" style="left:1096px;top:113px;width:338px;height:42px;background:#313131;border:1px solid #3c3c3c;border-radius:5px"></div>
<div class="t" style="left:1106.33px;top:113.27px;font-size:21.439px;line-height:40px;color:#cccccc;transform:scaleY(1.0);transform-origin:0 27.43px;">GetTemperaturesInfo</div>
<div class="t" style="left:1330.70px;top:114.90px;font-size:16.748px;line-height:40px;color:#cccccc;transform:scaleY(1.0);transform-origin:0 25.80px;">Aa</div>
<div class="t" style="left:1365.12px;top:113.04px;font-size:22.115px;line-height:40px;color:#cccccc;transform:scaleY(1.0);transform-origin:0 27.66px;">ab</div>
<svg class="a" style="left:1363px;top:136px" width="29" height="8" viewBox="0 0 29 8"><path d="M1 0.5 V6.8 H28 V0.5" fill="none" stroke="#cccccc" stroke-width="1.7"/></svg>
<div class="a" style="left:1403.7px;top:137px;width:7.3px;height:7.3px;background:#cccccc;"></div>
<svg class="a" style="left:1411px;top:122px" width="14" height="15" viewBox="0 0 14 15"><path d="M7 0.5 V14 M1 4 L13 10.5 M13 4 L1 10.5" fill="none" stroke="#cccccc" stroke-width="1.8"/></svg>
<svg class="a" style="left:1442.2px;top:125.8px" width="20" height="20" viewBox="0 0 20 20"><path d="M4.5 0.5 L1.5 5 M3 2.6 H9 M5.8 3.2 L7.2 5.2 M13.5 0.5 L10.5 5 M12 2.6 H19 M14.8 3.2 L16.2 5.2 M2.5 7.5 H16.5 V10.6 H3.5 V13.6 H17.2 Q17.4 18.2 14.2 17.6 M9.8 6 V19.5 M8.8 13.8 L1.5 19.2" fill="none" stroke="#cccccc" stroke-width="1.7" stroke-linecap="butt"/></svg>
<div class="t" style="left:1467.00px;top:114.85px;font-size:21.200px;line-height:40px;color:#cccccc;">2</div>
<svg class="a" style="left:1483.8px;top:126.5px" width="20" height="20" viewBox="0 0 20 20"><path d="M0.8 3.5 H8.5 M4.6 3.5 V15.2 M0.5 17.2 L8.8 13.6 M9 1.8 H19.5 M14.2 1.8 L13.4 5 M10.5 5.2 H18.2 V14.3 H10.5 Z M10.5 9.6 H18.2 M13.6 14.8 L9.2 19 M15.2 15.2 L19.6 18.8" fill="none" stroke="#cccccc" stroke-width="1.7" stroke-linecap="butt"/></svg>
<svg class="a" style="left:1505px;top:139px" width="6" height="8" viewBox="0 0 6 8"><path d="M4.5 0.5 L1.5 7.5" stroke="#cccccc" stroke-width="2"/></svg>
<svg class="a" style="left:1523.8px;top:126.5px" width="20" height="20" viewBox="0 0 20 20"><path d="M2.5 5.8 H17.5 M7 0.8 V13.5 M13 0.8 V13.5 M0.8 13.5 H19.2 M7 15.5 L1.8 19.5 M12.8 15.5 L18.5 19.5" fill="none" stroke="#cccccc" stroke-width="1.7" stroke-linecap="butt"/></svg>
<div class="t" style="left:1549.00px;top:114.85px;font-size:21.200px;line-height:40px;color:#cccccc;">3</div>
<svg class="a" style="left:1565.9px;top:126.5px" width="20" height="20" viewBox="0 0 20 20"><path d="M0.8 3.5 H8.5 M4.6 3.5 V15.2 M0.5 17.2 L8.8 13.6 M9 1.8 H19.5 M14.2 1.8 L13.4 5 M10.5 5.2 H18.2 V14.3 H10.5 Z M10.5 9.6 H18.2 M13.6 14.8 L9.2 19 M15.2 15.2 L19.6 18.8" fill="none" stroke="#cccccc" stroke-width="1.7" stroke-linecap="butt"/></svg>
<div class="a" style="left:1591px;top:115px;width:36px;height:37px;border:1.6px solid #0078d4;border-radius:7px"></div>
<svg class="a" style="left:1600px;top:121px" width="20" height="23" viewBox="0 0 20 23"><path d="M10 1.5 V22 M1.2 10 L10 1.5 L18.8 10" fill="none" stroke="#cccccc" stroke-width="1.8"/></svg>
<svg class="a" style="left:1642px;top:121px" width="20" height="23" viewBox="0 0 20 23"><path d="M10 0.5 V21 M1.2 13 L10 21.5 L18.8 13" fill="none" stroke="#cccccc" stroke-width="1.8"/></svg>
<svg class="a" style="left:1680px;top:125px" width="25" height="16" viewBox="0 0 25 16"><path d="M0 1 H19.5 M0 7.9 H24.5 M0 14.3 H16" fill="none" stroke="#cccccc" stroke-width="1.9"/></svg>
<svg class="a" style="left:1725px;top:126px" width="16" height="16" viewBox="0 0 16 16"><path d="M0.7 0.7 L15 15 M15 0.7 L0.7 15" fill="none" stroke="#cccccc" stroke-width="1.9"/></svg>
<svg class="a" style="left:0;top:0" width="1848" height="953" viewBox="0 0 1848 953"><rect x="1830.0" y="108.2" width="1.0" height="1.2" fill="#c8c8c8" fill-opacity="0.4"/><rect x="1830.0" y="110.2" width="1.0" height="1.2" fill="#c8c8c8" fill-opacity="0.4"/><rect x="1836.0" y="112.2" width="8.0" height="1.2" fill="#9cdcfe" fill-opacity="0.34"/><rect x="1844.0" y="112.2" width="1.0" height="1.2" fill="#c8c8c8" fill-opacity="0.3"/><rect x="1846.0" y="112.2" width="2.0" height="1.2" fill="#569cd6" fill-opacity="0.34"/><rect x="1840.0" y="114.2" width="1.0" height="1.2" fill="#c8c8c8" fill-opacity="0.4"/><rect x="1838.0" y="116.2" width="1.0" height="1.2" fill="#c8c8c8" fill-opacity="0.4"/><rect x="1842.0" y="118.2" width="6.0" height="1.2" fill="#9cdcfe" fill-opacity="0.34"/><rect x="1842.0" y="120.2" width="6.0" height="1.2" fill="#9cdcfe" fill-opacity="0.34"/><rect x="1842.0" y="122.2" width="6.0" height="1.2" fill="#9cdcfe" fill-opacity="0.34"/><rect x="1842.0" y="124.2" width="6.0" height="1.2" fill="#9cdcfe" fill-opacity="0.34"/><rect x="1842.0" y="126.2" width="6.0" height="1.2" fill="#9cdcfe" fill-opacity="0.34"/><rect x="1842.0" y="128.2" width="6.0" height="1.2" fill="#9cdcfe" fill-opacity="0.34"/><rect x="1842.0" y="130.2" width="6.0" height="1.2" fill="#9cdcfe" fill-opacity="0.34"/><rect x="1842.0" y="132.2" width="6.0" height="1.2" fill="#9cdcfe" fill-opacity="0.34"/><rect x="1842.0" y="134.2" width="6.0" height="1.2" fill="#9cdcfe" fill-opacity="0.34"/><rect x="1838.0" y="136.2" width="1.0" height="1.2" fill="#c8c8c8" fill-opacity="0.4"/><rect x="1834.0" y="138.2" width="1.0" height="1.2" fill="#c8c8c8" fill-opacity="0.4"/><rect x="1830.0" y="140.2" width="1.0" height="1.2" fill="#c8c8c8" fill-opacity="0.4"/><rect x="1826.0" y="142.2" width="1.0" height="1.2" fill="#c8c8c8" fill-opacity="0.4"/><rect x="1822.0" y="144.2" width="1.0" height="1.2" fill="#c8c8c8" fill-opacity="0.4"/><rect x="1818.0" y="146.2" width="1.0" height="1.2" fill="#c8c8c8" fill-opacity="0.4"/><rect x="1814.0" y="148.2" width="1.0" height="1.2" fill="#c8c8c8" fill-opacity="0.4"/><rect x="1810.0" y="150.2" width="1.0" height="1.2" fill="#c8c8c8" fill-opacity="0.4"/><rect x="1810.0" y="152.2" width="18.0" height="1.2" fill="#9cdcfe" fill-opacity="0.34"/><rect x="1830.0" y="152.2" width="1.0" height="1.2" fill="#c8c8c8" fill-opacity="0.4"/><rect x="1814.0" y="154.2" width="1.0" height="1.2" fill="#c8c8c8" fill-opacity="0.4"/><rect x="1822.0" y="156.2" width="8.0" height="1.2" fill="#9cdcfe" fill-opacity="0.34"/><rect x="1830.0" y="156.2" width="1.0" height="1.2" fill="#c8c8c8" fill-opacity="0.3"/><rect x="1832.0" y="156.2" width="16.0" height="1.2" fill="#ce9178" fill-opacity="0.34"/><rect x="1822.0" y="158.2" width="11.0" height="1.2" fill="#9cdcfe" fill-opacity="0.34"/><rect x="1833.0" y="158.2" width="1.0" height="1.2" fill="#c8c8c8" fill-opacity="0.3"/><rect x="1835.0" y="158.2" width="13.0" height="1.2" fill="#ce9178" fill-opacity="0.34"/><rect x="1822.0" y="160.2" width="14.0" height="1.2" fill="#9cdcfe" fill-opacity="0.34"/><rect x="1836.0" y="160.2" width="1.0" height="1.2" fill="#c8c8c8" fill-opacity="0.3"/><rect x="1838.0" y="160.2" width="10.0" height="1.2" fill="#ce9178" fill-opacity="0.34"/><rect x="1822.0" y="162.2" width="14.0" height="1.2" fill="#9cdcfe" fill-opacity="0.34"/><rect x="1838.0" y="162.2" width="1.0" height="1.2" fill="#c8c8c8" fill-opacity="0.4"/><rect x="1826.0" y="164.2" width="12.0" height="1.2" fill="#9cdcfe" fill-opacity="0.34"/><rect x="1838.0" y="164.2" width="1.0" height="1.2" fill="#c8c8c8" fill-opacity="0.3"/><rect x="1840.0" y="164.2" width="8.0" height="1.2" fill="#ce9178" fill-opacity="0.34"/><rect x="1826.0" y="166.2" width="14.0" height="1.2" fill="#9cdcfe" fill-opacity="0.34"/><rect x="1840.0" y="166.2" width="1.0" height="1.2" fill="#c8c8c8" fill-opacity="0.3"/><rect x="1842.0" y="166.2" width="6.0" height="1.2" fill="#ce9178" fill-opacity="0.34"/><rect x="1826.0" y="168.2" width="16.0" height="1.2" fill="#9cdcfe" fill-opacity="0.34"/><rect x="1842.0" y="168.2" width="1.0" height="1.2" fill="#c8c8c8" fill-opacity="0.3"/><rect x="1844.0" y="168.2" width="4.0" height="1.2" fill="#ce9178" fill-opacity="0.34"/><rect x="1822.0" y="170.2" width="13.0" height="1.2" fill="#9cdcfe" fill-opacity="0.34"/><rect x="1835.0" y="170.2" width="1.0" height="1.2" fill="#c8c8c8" fill-opacity="0.3"/><rect x="1837.0" y="170.2" width="11.0" height="1.2" fill="#ce9178" fill-opacity="0.34"/><rect x="1822.0" y="172.2" width="15.0" height="1.2" fill="#9cdcfe" fill-opacity="0.34"/><rect x="1837.0" y="172.2" width="1.0" height="1.2" fill="#c8c8c8" fill-opacity="0.3"/><rect x="1839.0" y="172.2" width="9.0" height="1.2" fill="#ce9178" fill-opacity="0.34"/><rect x="1822.0" y="174.2" width="12.0" height="1.2" fill="#9cdcfe" fill-opacity="0.34"/><rect x="1834.0" y="174.2" width="1.0" height="1.2" fill="#c8c8c8" fill-opacity="0.3"/><rect x="1836.0" y="174.2" width="12.0" height="1.2" fill="#ce9178" fill-opacity="0.34"/><rect x="1822.0" y="176.2" width="14.0" height="1.2" fill="#9cdcfe" fill-opacity="0.34"/><rect x="1836.0" y="176.2" width="1.0" height="1.2" fill="#c8c8c8" fill-opacity="0.3"/><rect x="1838.0" y="176.2" width="10.0" height="1.2" fill="#ce9178" fill-opacity="0.34"/><rect x="1822.0" y="178.2" width="16.0" height="1.2" fill="#9cdcfe" fill-opacity="0.34"/><rect x="1838.0" y="178.2" width="1.0" height="1.2" fill="#c8c8c8" fill-opacity="0.3"/><rect x="1840.0" y="178.2" width="8.0" height="1.2" fill="#ce9178" fill-opacity="0.34"/><rect x="1822.0" y="180.2" width="13.0" height="1.2" fill="#9cdcfe" fill-opacity="0.34"/><rect x="1835.0" y="180.2" width="1.0" height="1.2" fill="#c8c8c8" fill-opacity="0.3"/><rect x="1837.0" y="180.2" width="11.0" height="1.2" fill="#ce9178" fill-opacity="0.34"/><rect x="1822.0" y="182.2" width="15.0" height="1.2" fill="#9cdcfe" fill-opacity="0.34"/><rect x="1837.0" y="182.2" width="1.0" height="1.2" fill="#c8c8c8" fill-opacity="0.3"/><rect x="1839.0" y="182.2" width="9.0" height="1.2" fill="#ce9178" fill-opacity="0.34"/><rect x="1822.0" y="184.2" width="12.0" height="1.2" fill="#9cdcfe" fill-opacity="0.34"/><rect x="1834.0" y="184.2" width="1.0" height="1.2" fill="#c8c8c8" fill-opacity="0.3"/><rect x="1836.0" y="184.2" width="12.0" height="1.2" fill="#ce9178" fill-opacity="0.34"/><rect x="1822.0" y="186.2" width="14.0" height="1.2" fill="#9cdcfe" fill-opacity="0.34"/><rect x="1836.0" y="186.2" width="1.0" height="1.2" fill="#c8c8c8" fill-opacity="0.3"/><rect x="1838.0" y="186.2" width="10.0" height="1.2" fill="#ce9178" fill-opacity="0.34"/><rect x="1822.0" y="188.2" width="16.0" height="1.2" fill="#9cdcfe" fill-opacity="0.34"/><rect x="1838.0" y="188.2" width="1.0" height="1.2" fill="#c8c8c8" fill-opacity="0.3"/><rect x="1840.0" y="188.2" width="8.0" height="1.2" fill="#ce9178" fill-opacity="0.34"/><rect x="1822.0" y="190.2" width="13.0" height="1.2" fill="#9cdcfe" fill-opacity="0.34"/><rect x="1835.0" y="190.2" width="1.0" height="1.2" fill="#c8c8c8" fill-opacity="0.3"/><rect x="1837.0" y="190.2" width="11.0" height="1.2" fill="#ce9178" fill-opacity="0.34"/><rect x="1822.0" y="192.2" width="15.0" height="1.2" fill="#9cdcfe" fill-opacity="0.34"/><rect x="1837.0" y="192.2" width="1.0" height="1.2" fill="#c8c8c8" fill-opacity="0.3"/><rect x="1839.0" y="192.2" width="9.0" height="1.2" fill="#ce9178" fill-opacity="0.34"/><rect x="1818.0" y="194.2" width="1.0" height="1.2" fill="#c8c8c8" fill-opacity="0.4"/><rect x="1814.0" y="196.2" width="1.0" height="1.2" fill="#c8c8c8" fill-opacity="0.4"/><rect x="1810.0" y="198.2" width="1.0" height="1.2" fill="#c8c8c8" fill-opacity="0.4"/><rect x="1806.0" y="200.2" width="1.0" height="1.2" fill="#c8c8c8" fill-opacity="0.4"/><rect x="1802.0" y="202.2" width="1.0" height="1.2" fill="#c8c8c8" fill-opacity="0.4"/><rect x="1798.0" y="204.2" width="1.0" height="1.2" fill="#c8c8c8" fill-opacity="0.4"/><rect x="1799.0" y="206.2" width="1.0" height="1.2" fill="#c8c8c8" fill-opacity="0.4"/><rect x="1802.0" y="208.2" width="7.0" height="1.2" fill="#9cdcfe" fill-opacity="0.34"/><rect x="1809.0" y="208.2" width="1.0" height="1.2" fill="#c8c8c8" fill-opacity="0.3"/><rect x="1811.0" y="208.2" width="34.0" height="1.2" fill="#ce9178" fill-opacity="0.34"/><rect x="1802.0" y="210.2" width="13.0" height="1.2" fill="#9cdcfe" fill-opacity="0.34"/><rect x="1817.0" y="210.2" width="1.0" height="1.2" fill="#c8c8c8" fill-opacity="0.4"/><rect x="1806.0" y="212.2" width="1.0" height="1.2" fill="#c8c8c8" fill-opacity="0.4"/><rect x="1810.0" y="214.2" width="8.0" height="1.2" fill="#9cdcfe" fill-opacity="0.34"/><rect x="1818.0" y="214.2" width="1.0" height="1.2" fill="#c8c8c8" fill-opacity="0.3"/><rect x="1820.0" y="214.2" width="4.0" height="1.2" fill="#ce9178" fill-opacity="0.34"/><rect x="1810.0" y="216.2" width="10.0" height="1.2" fill="#9cdcfe" fill-opacity="0.34"/><rect x="1822.0" y="216.2" width="1.0" height="1.2" fill="#c8c8c8" fill-opacity="0.4"/><rect x="1814.0" y="218.2" width="14.0" height="1.2" fill="#9cdcfe" fill-opacity="0.34"/><rect x="1828.0" y="218.2" width="1.0" height="1.2" fill="#c8c8c8" fill-opacity="0.3"/><rect x="1830.0" y="218.2" width="18.0" height="1.2" fill="#ce9178" fill-opacity="0.34"/><rect x="1814.0" y="220.2" width="12.0" height="1.2" fill="#9cdcfe" fill-opacity="0.34"/><rect x="1826.0" y="220.2" width="1.0" height="1.2" fill="#c8c8c8" fill-opacity="0.3"/><rect x="1828.0" y="220.2" width="20.0" height="1.2" fill="#ce9178" fill-opacity="0.34"/><rect x="1814.0" y="222.2" width="15.0" height="1.2" fill="#9cdcfe" fill-opacity="0.34"/><rect x="1829.0" y="222.2" width="1.0" height="1.2" fill="#c8c8c8" fill-opacity="0.3"/><rect x="1831.0" y="222.2" width="17.0" height="1.2" fill="#ce9178" fill-opacity="0.34"/><rect x="1814.0" y="224.2" width="13.0" height="1.2" fill="#9cdcfe" fill-opacity="0.34"/><rect x="1827.0" y="224.2" width="1.0" height="1.2" fill="#c8c8c8" fill-opacity="0.3"/><rect x="1829.0" y="224.2" width="19.0" height="1.2" fill="#ce9178" fill-opacity="0.34"/><rect x="1814.0" y="226.2" width="14.0" height="1.2" fill="#9cdcfe" fill-opacity="0.34"/><rect x="1828.0" y="226.2" width="1.0" height="1.2" fill="#c8c8c8" fill-opacity="0.3"/><rect x="1830.0" y="226.2" width="18.0" height="1.2" fill="#ce9178" fill-opacity="0.34"/><rect x="1814.0" y="228.2" width="16.0" height="1.2" fill="#9cdcfe" fill-opacity="0.34"/><rect x="1830.0" y="228.2" width="1.0" height="1.2" fill="#c8c8c8" fill-opacity="0.3"/><rect x="1832.0" y="228.2" width="16.0" height="1.2" fill="#ce9178" fill-opacity="0.34"/><rect x="1810.0" y="230.2" width="1.0" height="1.2" fill="#c8c8c8" fill-opacity="0.4"/><rect x="1810.0" y="232.2" width="14.0" height="1.2" fill="#9cdcfe" fill-opacity="0.34"/><rect x="1826.0" y="232.2" width="1.0" height="1.2" fill="#c8c8c8" fill-opacity="0.4"/><rect x="1814.0" y="234.2" width="8.0" height="1.2" fill="#9cdcfe" fill-opacity="0.34"/><rect x="1824.0" y="234.2" width="1.0" height="1.2" fill="#c8c8c8" fill-opacity="0.4"/><rect x="1818.0" y="236.2" width="1.0" height="1.2" fill="#c8c8c8" fill-opacity="0.4"/><rect x="1822.0" y="238.2" width="1.0" height="1.2" fill="#c8c8c8" fill-opacity="0.4"/><rect x="1826.0" y="240.2" width="10.0" height="1.2" fill="#9cdcfe" fill-opacity="0.34"/><rect x="1836.0" y="240.2" width="1.0" height="1.2" fill="#c8c8c8" fill-opacity="0.3"/><rect x="1838.0" y="240.2" width="8.0" height="1.2" fill="#ce9178" fill-opacity="0.34"/><rect x="1826.0" y="242.2" width="10.0" height="1.2" fill="#9cdcfe" fill-opacity="0.34"/><rect x="1836.0" y="242.2" width="1.0" height="1.2" fill="#c8c8c8" fill-opacity="0.3"/><rect x="1838.0" y="242.2" width="8.0" height="1.2" fill="#ce9178" fill-opacity="0.34"/><rect x="1822.0" y="244.2" width="1.0" height="1.2" fill="#c8c8c8" fill-opacity="0.4"/><rect x="1818.0" y="246.2" width="1.0" height="1.2" fill="#c8c8c8" fill-opacity="0.4"/><rect x="1814.0" y="248.2" width="1.0" height="1.2" fill="#c8c8c8" fill-opacity="0.4"/><rect x="1814.0" y="250.2" width="18.0" height="1.2" fill="#9cdcfe" fill-opacity="0.34"/><rect x="1834.0" y="250.2" width="1.0" height="1.2" fill="#c8c8c8" fill-opacity="0.4"/><rect x="1818.0" y="252.2" width="10.0" height="1.2" fill="#9cdcfe" fill-opacity="0.34"/><rect x="1830.0" y="252.2" width="1.0" height="1.2" fill="#c8c8c8" fill-opacity="0.4"/><rect x="1822.0" y="254.2" width="1.0" height="1.2" fill="#c8c8c8" fill-opacity="0.4"/><rect x="1826.0" y="256.2" width="10.0" height="1.2" fill="#9cdcfe" fill-opacity="0.34"/><rect x="1836.0" y="256.2" width="1.0" height="1.2" fill="#c8c8c8" fill-opacity="0.3"/><rect x="1838.0" y="256.2" width="10.0" height="1.2" fill="#ce9178" fill-opacity="0.34"/><rect x="1826.0" y="258.2" width="10.0" height="1.2" fill="#9cdcfe" fill-opacity="0.34"/><rect x="1836.0" y="258.2" width="1.0" height="1.2" fill="#c8c8c8" fill-opacity="0.3"/><rect x="1838.0" y="258.2" width="10.0" height="1.2" fill="#ce9178" fill-opacity="0.34"/><rect x="1822.0" y="260.2" width="1.0" height="1.2" fill="#c8c8c8" fill-opacity="0.4"/><rect x="1818.0" y="262.2" width="1.0" height="1.2" fill="#c8c8c8" fill-opacity="0.4"/><rect x="1814.0" y="264.2" width="1.0" height="1.2" fill="#c8c8c8" fill-opacity="0.4"/><rect x="1810.0" y="266.2" width="1.0" height="1.2" fill="#c8c8c8" fill-opacity="0.4"/><rect x="1810.0" y="268.2" width="18.0" height="1.2" fill="#9cdcfe" fill-opacity="0.34"/><rect x="1830.0" y="268.2" width="1.0" height="1.2" fill="#c8c8c8" fill-opacity="0.4"/><rect x="1814.0" y="270.2" width="1.0" height="1.2" fill="#c8c8c8" fill-opacity="0.4"/><rect x="1822.0" y="272.2" width="8.0" height="1.2" fill="#9cdcfe" fill-opacity="0.34"/><rect x="1830.0" y="272.2" width="1.0" height="1.2" fill="#c8c8c8" fill-opacity="0.3"/><rect x="1832.0" y="272.2" width="16.0" height="1.2" fill="#ce9178" fill-opacity="0.34"/><rect x="1822.0" y="274.2" width="11.0" height="1.2" fill="#9cdcfe" fill-opacity="0.34"/><rect x="1833.0" y="274.2" width="1.0" height="1.2" fill="#c8c8c8" fill-opacity="0.3"/><rect x="1835.0" y="274.2" width="13.0" height="1.2" fill="#ce9178" fill-opacity="0.34"/><rect x="1822.0" y="276.2" width="14.0" height="1.2" fill="#9cdcfe" fill-opacity="0.34"/><rect x="1836.0" y="276.2" width="1.0" height="1.2" fill="#c8c8c8" fill-opacity="0.3"/><rect x="1838.0" y="276.2" width="10.0" height="1.2" fill="#ce9178" fill-opacity="0.34"/><rect x="1822.0" y="278.2" width="14.0" height="1.2" fill="#9cdcfe" fill-opacity="0.34"/><rect x="1838.0" y="278.2" width="1.0" height="1.2" fill="#c8c8c8" fill-opacity="0.4"/><rect x="1826.0" y="280.2" width="14.0" height="1.2" fill="#9cdcfe" fill-opacity="0.34"/><rect x="1840.0" y="280.2" width="1.0" height="1.2" fill="#c8c8c8" fill-opacity="0.3"/><rect x="1842.0" y="280.2" width="6.0" height="1.2" fill="#ce9178" fill-opacity="0.34"/><rect x="1826.0" y="282.2" width="14.0" height="1.2" fill="#9cdcfe" fill-opacity="0.34"/><rect x="1840.0" y="282.2" width="1.0" height="1.2" fill="#c8c8c8" fill-opacity="0.3"/><rect x="1842.0" y="282.2" width="6.0" height="1.2" fill="#ce9178" fill-opacity="0.34"/><rect x="1826.0" y="284.2" width="14.0" height="1.2" fill="#9cdcfe" fill-opacity="0.34"/><rect x="1840.0" y="284.2" width="1.0" height="1.2" fill="#c8c8c8" fill-opacity="0.3"/><rect x="1842.0" y="284.2" width="6.0" height="1.2" fill="#ce9178" fill-opacity="0.34"/><rect x="1826.0" y="286.2" width="14.0" height="1.2" fill="#9cdcfe" fill-opacity="0.34"/><rect x="1840.0" y="286.2" width="1.0" height="1.2" fill="#c8c8c8" fill-opacity="0.3"/><rect x="1842.0" y="286.2" width="6.0" height="1.2" fill="#ce9178" fill-opacity="0.34"/><rect x="1822.0" y="288.2" width="1.0" height="1.2" fill="#c8c8c8" fill-opacity="0.4"/><rect x="1818.0" y="290.2" width="1.0" height="1.2" fill="#c8c8c8" fill-opacity="0.4"/><rect x="1814.0" y="292.2" width="1.0" height="1.2" fill="#c8c8c8" fill-opacity="0.4"/><rect x="1810.0" y="294.2" width="1.0" height="1.2" fill="#c8c8c8" fill-opacity="0.4"/><rect x="1806.0" y="296.2" width="1.0" height="1.2" fill="#c8c8c8" fill-opacity="0.4"/><rect x="1802.0" y="298.2" width="1.0" height="1.2" fill="#c8c8c8" fill-opacity="0.4"/><rect x="1798.0" y="300.2" width="1.0" height="1.2" fill="#c8c8c8" fill-opacity="0.4"/><rect x="1799.0" y="302.2" width="1.0" height="1.2" fill="#c8c8c8" fill-opacity="0.4"/><rect x="1802.0" y="304.2" width="7.0" height="1.2" fill="#9cdcfe" fill-opacity="0.34"/><rect x="1809.0" y="304.2" width="1.0" height="1.2" fill="#c8c8c8" fill-opacity="0.3"/><rect x="1811.0" y="304.2" width="32.0" height="1.2" fill="#ce9178" fill-opacity="0.34"/><rect x="1802.0" y="306.2" width="13.0" height="1.2" fill="#9cdcfe" fill-opacity="0.34"/><rect x="1817.0" y="306.2" width="1.0" height="1.2" fill="#c8c8c8" fill-opacity="0.4"/><rect x="1806.0" y="308.2" width="1.0" height="1.2" fill="#c8c8c8" fill-opacity="0.4"/><rect x="1810.0" y="310.2" width="8.0" height="1.2" fill="#9cdcfe" fill-opacity="0.34"/><rect x="1818.0" y="310.2" width="1.0" height="1.2" fill="#c8c8c8" fill-opacity="0.3"/><rect x="1820.0" y="310.2" width="4.0" height="1.2" fill="#ce9178" fill-opacity="0.34"/><rect x="1810.0" y="312.2" width="10.0" height="1.2" fill="#9cdcfe" fill-opacity="0.34"/><rect x="1822.0" y="312.2" width="1.0" height="1.2" fill="#c8c8c8" fill-opacity="0.4"/><rect x="1814.0" y="314.2" width="1.0" height="1.2" fill="#c8c8c8" fill-opacity="0.4"/><rect x="1818.0" y="316.2" width="14.0" height="1.2" fill="#9cdcfe" fill-opacity="0.34"/><rect x="1832.0" y="316.2" width="1.0" height="1.2" fill="#c8c8c8" fill-opacity="0.3"/><rect x="1834.0" y="316.2" width="14.0" height="1.2" fill="#ce9178" fill-opacity="0.34"/><rect x="1818.0" y="318.2" width="10.0" height="1.2" fill="#9cdcfe" fill-opacity="0.34"/><rect x="1828.0" y="318.2" width="1.0" height="1.2" fill="#c8c8c8" fill-opacity="0.3"/><rect x="1830.0" y="318.2" width="18.0" height="1.2" fill="#ce9178" fill-opacity="0.34"/><rect x="1814.0" y="320.2" width="1.0" height="1.2" fill="#c8c8c8" fill-opacity="0.4"/><rect x="1814.0" y="322.2" width="30.0" height="1.2" fill="#9cdcfe" fill-opacity="0.34"/><rect x="1844.0" y="322.2" width="1.0" height="1.2" fill="#c8c8c8" fill-opacity="0.3"/><rect x="1846.0" y="322.2" width="2.0" height="1.2" fill="#ce9178" fill-opacity="0.34"/><rect x="1790" y="324.0" width="58" height="2" fill="#264f78" fill-opacity="0.55"/><rect x="1814.0" y="324.2" width="18.0" height="1.2" fill="#9cdcfe" fill-opacity="0.34"/><rect x="1834.0" y="324.2" width="1.0" height="1.2" fill="#c8c8c8" fill-opacity="0.4"/><rect x="1814.0" y="328.2" width="20.0" height="1.2" fill="#9cdcfe" fill-opacity="0.34"/><rect x="1836.0" y="328.2" width="1.0" height="1.2" fill="#c8c8c8" fill-opacity="0.4"/><rect x="1790" y="330.0" width="58" height="2" fill="#d18616" fill-opacity="0.75"/><rect x="1818.0" y="330.2" width="18.0" height="1.2" fill="#9cdcfe" fill-opacity="0.34"/><rect x="1836.0" y="330.2" width="1.0" height="1.2" fill="#c8c8c8" fill-opacity="0.3"/><rect x="1838.0" y="330.2" width="10.0" height="1.2" fill="#ce9178" fill-opacity="0.34"/><rect x="1826.0" y="332.2" width="10.0" height="1.2" fill="#9cdcfe" fill-opacity="0.34"/><rect x="1836.0" y="332.2" width="1.0" height="1.2" fill="#c8c8c8" fill-opacity="0.3"/><rect x="1838.0" y="332.2" width="1.0" height="1.2" fill="#b5cea8" fill-opacity="0.34"/><rect x="1826.0" y="334.2" width="10.0" height="1.2" fill="#9cdcfe" fill-opacity="0.34"/><rect x="1836.0" y="334.2" width="1.0" height="1.2" fill="#c8c8c8" fill-opacity="0.3"/><rect x="1838.0" y="334.2" width="1.0" height="1.2" fill="#b5cea8" fill-opacity="0.34"/><rect x="1814.0" y="336.2" width="1.0" height="1.2" fill="#c8c8c8" fill-opacity="0.4"/><rect x="1814.0" y="338.2" width="8.0" height="1.2" fill="#9cdcfe" fill-opacity="0.34"/><rect x="1822.0" y="338.2" width="1.0" height="1.2" fill="#c8c8c8" fill-opacity="0.3"/><rect x="1824.0" y="338.2" width="24.0" height="1.2" fill="#ce9178" fill-opacity="0.34"/><rect x="1814.0" y="340.2" width="8.0" height="1.2" fill="#9cdcfe" fill-opacity="0.34"/><rect x="1822.0" y="340.2" width="1.0" height="1.2" fill="#c8c8c8" fill-opacity="0.3"/><rect x="1824.0" y="340.2" width="24.0" height="1.2" fill="#ce9178" fill-opacity="0.34"/><rect x="1814.0" y="342.2" width="14.0" height="1.2" fill="#9cdcfe" fill-opacity="0.34"/><rect x="1828.0" y="342.2" width="1.0" height="1.2" fill="#c8c8c8" fill-opacity="0.3"/><rect x="1830.0" y="342.2" width="18.0" height="1.2" fill="#ce9178" fill-opacity="0.34"/><rect x="1814.0" y="344.2" width="16.0" height="1.2" fill="#9cdcfe" fill-opacity="0.34"/><rect x="1830.0" y="344.2" width="1.0" height="1.2" fill="#c8c8c8" fill-opacity="0.3"/><rect x="1832.0" y="344.2" width="16.0" height="1.2" fill="#ce9178" fill-opacity="0.34"/><rect x="1814.0" y="346.2" width="20.0" height="1.2" fill="#9cdcfe" fill-opacity="0.34"/><rect x="1834.0" y="346.2" width="1.0" height="1.2" fill="#c8c8c8" fill-opacity="0.3"/><rect x="1836.0" y="346.2" width="12.0" height="1.2" fill="#ce9178" fill-opacity="0.34"/><rect x="1810.0" y="348.2" width="1.0" height="1.2" fill="#c8c8c8" fill-opacity="0.4"/><rect x="1810.0" y="350.2" width="14.0" height="1.2" fill="#9cdcfe" fill-opacity="0.34"/><rect x="1826.0" y="350.2" width="1.0" height="1.2" fill="#c8c8c8" fill-opacity="0.4"/><rect x="1790" y="352.0" width="58" height="2" fill="#264f78" fill-opacity="0.55"/><rect x="1814.0" y="352.2" width="16.0" height="1.2" fill="#9cdcfe" fill-opacity="0.34"/><rect x="1832.0" y="352.2" width="1.0" height="1.2" fill="#c8c8c8" fill-opacity="0.4"/><rect x="1814.0" y="354.2" width="1.0" height="1.2" fill="#c8c8c8" fill-opacity="0.4"/><rect x="1790" y="356.0" width="58" height="2" fill="#264f78" fill-opacity="0.55"/><rect x="1814.0" y="356.2" width="11.0" height="1.2" fill="#9cdcfe" fill-opacity="0.34"/><rect x="1827.0" y="356.2" width="1.0" height="1.2" fill="#c8c8c8" fill-opacity="0.4"/><rect x="1814.0" y="358.2" width="1.0" height="1.2" fill="#c8c8c8" fill-opacity="0.4"/><rect x="1790" y="360.0" width="58" height="2" fill="#264f78" fill-opacity="0.55"/><rect x="1814.0" y="360.2" width="18.0" height="1.2" fill="#9cdcfe" fill-opacity="0.34"/><rect x="1834.0" y="360.2" width="1.0" height="1.2" fill="#c8c8c8" fill-opacity="0.4"/><rect x="1814.0" y="362.2" width="1.0" height="1.2" fill="#c8c8c8" fill-opacity="0.4"/><rect x="1815" y="364" width="19" height="2" fill="#f0a020" fill-opacity="0.95"/><rect x="1818.0" y="366.2" width="9.0" height="1.2" fill="#9cdcfe" fill-opacity="0.34"/><rect x="1827.0" y="366.2" width="1.0" height="1.2" fill="#c8c8c8" fill-opacity="0.3"/><rect x="1829.0" y="366.2" width="19.0" height="1.2" fill="#ce9178" fill-opacity="0.34"/><rect x="1818.0" y="368.2" width="7.0" height="1.2" fill="#9cdcfe" fill-opacity="0.34"/><rect x="1827.0" y="368.2" width="1.0" height="1.2" fill="#c8c8c8" fill-opacity="0.4"/><rect x="1822.0" y="370.2" width="1.0" height="1.2" fill="#c8c8c8" fill-opacity="0.4"/><rect x="1826.0" y="372.2" width="6.0" height="1.2" fill="#9cdcfe" fill-opacity="0.34"/><rect x="1832.0" y="372.2" width="1.0" height="1.2" fill="#c8c8c8" fill-opacity="0.3"/><rect x="1834.0" y="372.2" width="8.0" height="1.2" fill="#ce9178" fill-opacity="0.34"/><rect x="1826.0" y="374.2" width="9.0" height="1.2" fill="#9cdcfe" fill-opacity="0.34"/><rect x="1835.0" y="374.2" width="1.0" height="1.2" fill="#c8c8c8" fill-opacity="0.3"/><rect x="1837.0" y="374.2" width="11.0" height="1.2" fill="#ce9178" fill-opacity="0.34"/><rect x="1822.0" y="376.2" width="1.0" height="1.2" fill="#c8c8c8" fill-opacity="0.4"/><rect x="1818.0" y="378.2" width="1.0" height="1.2" fill="#c8c8c8" fill-opacity="0.4"/><rect x="1814.0" y="380.2" width="1.0" height="1.2" fill="#c8c8c8" fill-opacity="0.4"/><rect x="1790" y="382.0" width="58" height="2" fill="#264f78" fill-opacity="0.55"/><rect x="1814.0" y="382.2" width="14.0" height="1.2" fill="#9cdcfe" fill-opacity="0.34"/><rect x="1830.0" y="382.2" width="1.0" height="1.2" fill="#c8c8c8" fill-opacity="0.4"/><rect x="1814.0" y="384.2" width="1.0" height="1.2" fill="#c8c8c8" fill-opacity="0.4"/><rect x="1790" y="386.0" width="58" height="2" fill="#264f78" fill-opacity="0.55"/><rect x="1814.0" y="386.2" width="9.0" height="1.2" fill="#9cdcfe" fill-opacity="0.34"/><rect x="1825.0" y="386.2" width="1.0" height="1.2" fill="#c8c8c8" fill-opacity="0.4"/><rect x="1814.0" y="388.2" width="1.0" height="1.2" fill="#c8c8c8" fill-opacity="0.4"/><rect x="1790" y="390.0" width="58" height="2" fill="#264f78" fill-opacity="0.55"/><rect x="1814.0" y="390.2" width="10.0" height="1.2" fill="#9cdcfe" fill-opacity="0.34"/><rect x="1826.0" y="390.2" width="1.0" height="1.2" fill="#c8c8c8" fill-opacity="0.4"/><rect x="1814.0" y="392.2" width="1.0" height="1.2" fill="#c8c8c8" fill-opacity="0.4"/><rect x="1810.0" y="394.2" width="1.0" height="1.2" fill="#c8c8c8" fill-opacity="0.4"/><rect x="1810.0" y="396.2" width="16.0" height="1.2" fill="#9cdcfe" fill-opacity="0.34"/><rect x="1828.0" y="396.2" width="1.0" height="1.2" fill="#c8c8c8" fill-opacity="0.4"/><rect x="1790" y="400.0" width="58" height="2" fill="#264f78" fill-opacity="0.55"/><rect x="1814.0" y="400.2" width="1.0" height="1.2" fill="#c8c8c8" fill-opacity="0.4"/><rect x="1814.0" y="400.2" width="1.0" height="1.2" fill="#c8c8c8" fill-opacity="0.4"/><rect x="1790" y="404.0" width="58" height="2" fill="#264f78" fill-opacity="0.55"/><rect x="1814.0" y="404.2" width="1.0" height="1.2" fill="#c8c8c8" fill-opacity="0.4"/><rect x="1814.0" y="404.2" width="1.0" height="1.2" fill="#c8c8c8" fill-opacity="0.4"/><rect x="1790" y="408.0" width="58" height="2" fill="#264f78" fill-opacity="0.55"/><rect x="1814.0" y="408.2" width="1.0" height="1.2" fill="#c8c8c8" fill-opacity="0.4"/><rect x="1814.0" y="408.2" width="1.0" height="1.2" fill="#c8c8c8" fill-opacity="0.4"/><rect x="1790" y="412.0" width="58" height="2" fill="#264f78" fill-opacity="0.55"/><rect x="1814.0" y="412.2" width="1.0" height="1.2" fill="#c8c8c8" fill-opacity="0.4"/><rect x="1814.0" y="412.2" width="1.0" height="1.2" fill="#c8c8c8" fill-opacity="0.4"/><rect x="1790" y="416.0" width="58" height="2" fill="#264f78" fill-opacity="0.55"/><rect x="1814.0" y="416.2" width="1.0" height="1.2" fill="#c8c8c8" fill-opacity="0.4"/><rect x="1814.0" y="416.2" width="1.0" height="1.2" fill="#c8c8c8" fill-opacity="0.4"/><rect x="1790" y="420.0" width="58" height="2" fill="#264f78" fill-opacity="0.55"/><rect x="1814.0" y="420.2" width="1.0" height="1.2" fill="#c8c8c8" fill-opacity="0.4"/><rect x="1814.0" y="420.2" width="1.0" height="1.2" fill="#c8c8c8" fill-opacity="0.4"/><rect x="1790" y="424.0" width="58" height="2" fill="#264f78" fill-opacity="0.55"/><rect x="1814.0" y="424.2" width="1.0" height="1.2" fill="#c8c8c8" fill-opacity="0.4"/><rect x="1814.0" y="424.2" width="1.0" height="1.2" fill="#c8c8c8" fill-opacity="0.4"/><rect x="1810.0" y="428.2" width="1.0" height="1.2" fill="#c8c8c8" fill-opacity="0.4"/><rect x="1818.0" y="430.2" width="10.0" height="1.2" fill="#9cdcfe" fill-opacity="0.34"/><rect x="1828.0" y="430.2" width="1.0" height="1.2" fill="#c8c8c8" fill-opacity="0.3"/><rect x="1830.0" y="430.2" width="10.0" height="1.2" fill="#ce9178" fill-opacity="0.34"/><rect x="1818.0" y="432.2" width="12.0" height="1.2" fill="#9cdcfe" fill-opacity="0.34"/><rect x="1830.0" y="432.2" width="1.0" height="1.2" fill="#c8c8c8" fill-opacity="0.3"/><rect x="1832.0" y="432.2" width="12.0" height="1.2" fill="#ce9178" fill-opacity="0.34"/><rect x="1790" y="434.0" width="58" height="2" fill="#a86a14" fill-opacity="0.7"/><rect x="1827" y="434" width="19" height="2" fill="#f0a020" fill-opacity="0.9"/><rect x="1818.0" y="436.2" width="14.0" height="1.2" fill="#9cdcfe" fill-opacity="0.34"/><rect x="1832.0" y="436.2" width="1.0" height="1.2" fill="#c8c8c8" fill-opacity="0.3"/><rect x="1834.0" y="436.2" width="8.0" height="1.2" fill="#ce9178" fill-opacity="0.34"/><rect x="1814.0" y="438.2" width="1.0" height="1.2" fill="#c8c8c8" fill-opacity="0.4"/><rect x="1810.0" y="440.2" width="1.0" height="1.2" fill="#c8c8c8" fill-opacity="0.4"/><rect x="1810.0" y="442.2" width="14.0" height="1.2" fill="#9cdcfe" fill-opacity="0.34"/><rect x="1826.0" y="442.2" width="1.0" height="1.2" fill="#c8c8c8" fill-opacity="0.4"/><rect x="1790" y="444.0" width="58" height="2" fill="#264f78" fill-opacity="0.55"/><rect x="1814.0" y="444.2" width="1.0" height="1.2" fill="#c8c8c8" fill-opacity="0.4"/><rect x="1814.0" y="446.2" width="1.0" height="1.2" fill="#c8c8c8" fill-opacity="0.4"/><rect x="1790" y="448.0" width="58" height="2" fill="#264f78" fill-opacity="0.55"/><rect x="1814.0" y="448.2" width="1.0" height="1.2" fill="#c8c8c8" fill-opacity="0.4"/><rect x="1814.0" y="450.2" width="1.0" height="1.2" fill="#c8c8c8" fill-opacity="0.4"/><rect x="1790" y="452.0" width="58" height="2" fill="#264f78" fill-opacity="0.55"/><rect x="1814.0" y="452.2" width="1.0" height="1.2" fill="#c8c8c8" fill-opacity="0.4"/><rect x="1814.0" y="454.2" width="1.0" height="1.2" fill="#c8c8c8" fill-opacity="0.4"/><rect x="1790" y="456.0" width="58" height="2" fill="#264f78" fill-opacity="0.55"/><rect x="1814.0" y="456.2" width="1.0" height="1.2" fill="#c8c8c8" fill-opacity="0.4"/><rect x="1814.0" y="458.2" width="1.0" height="1.2" fill="#c8c8c8" fill-opacity="0.4"/><rect x="1790" y="460.0" width="58" height="2" fill="#264f78" fill-opacity="0.55"/><rect x="1814.0" y="460.2" width="1.0" height="1.2" fill="#c8c8c8" fill-opacity="0.4"/><rect x="1814.0" y="462.2" width="1.0" height="1.2" fill="#c8c8c8" fill-opacity="0.4"/><rect x="1790" y="464.0" width="58" height="2" fill="#264f78" fill-opacity="0.55"/><rect x="1814.0" y="464.2" width="1.0" height="1.2" fill="#c8c8c8" fill-opacity="0.4"/><rect x="1814.0" y="466.2" width="1.0" height="1.2" fill="#c8c8c8" fill-opacity="0.4"/><rect x="1810.0" y="468.2" width="1.0" height="1.2" fill="#c8c8c8" fill-opacity="0.4"/><rect x="1806.0" y="470.2" width="1.0" height="1.2" fill="#c8c8c8" fill-opacity="0.4"/><rect x="1806.0" y="472.2" width="1.0" height="1.2" fill="#c8c8c8" fill-opacity="0.4"/><rect x="1810.0" y="474.2" width="10.0" height="1.2" fill="#9cdcfe" fill-opacity="0.34"/><rect x="1822.0" y="474.2" width="8.0" height="1.2" fill="#ce9178" fill-opacity="0.34"/><rect x="1812.0" y="476.2" width="10.0" height="1.2" fill="#9cdcfe" fill-opacity="0.34"/><rect x="1814.0" y="478.2" width="10.0" height="1.2" fill="#9cdcfe" fill-opacity="0.34"/><rect x="1816.0" y="480.2" width="10.0" height="1.2" fill="#9cdcfe" fill-opacity="0.34"/><rect x="1828.0" y="480.2" width="8.0" height="1.2" fill="#ce9178" fill-opacity="0.34"/><rect x="1818.0" y="482.2" width="10.0" height="1.2" fill="#9cdcfe" fill-opacity="0.34"/><rect x="1820.0" y="484.2" width="10.0" height="1.2" fill="#9cdcfe" fill-opacity="0.34"/><rect x="1822.0" y="486.2" width="10.0" height="1.2" fill="#9cdcfe" fill-opacity="0.34"/><rect x="1834.0" y="486.2" width="8.0" height="1.2" fill="#ce9178" fill-opacity="0.34"/><rect x="1824.0" y="488.2" width="10.0" height="1.2" fill="#9cdcfe" fill-opacity="0.34"/><rect x="1826.0" y="490.2" width="10.0" height="1.2" fill="#9cdcfe" fill-opacity="0.34"/><rect x="1828.0" y="492.2" width="10.0" height="1.2" fill="#9cdcfe" fill-opacity="0.34"/><rect x="1840.0" y="492.2" width="8.0" height="1.2" fill="#ce9178" fill-opacity="0.34"/><rect x="1830.0" y="494.2" width="10.0" height="1.2" fill="#9cdcfe" fill-opacity="0.34"/><rect x="1832.0" y="496.2" width="10.0" height="1.2" fill="#9cdcfe" fill-opacity="0.34"/><rect x="1834.0" y="498.2" width="10.0" height="1.2" fill="#9cdcfe" fill-opacity="0.34"/><rect x="1846.0" y="498.2" width="2.0" height="1.2" fill="#ce9178" fill-opacity="0.34"/><rect x="1836.0" y="500.2" width="10.0" height="1.2" fill="#9cdcfe" fill-opacity="0.34"/><rect x="1846.0" y="502.2" width="2.0" height="1.2" fill="#9cdcfe" fill-opacity="0.34"/><rect x="1846.0" y="504.2" width="2.0" height="1.2" fill="#9cdcfe" fill-opacity="0.34"/><rect x="1846.0" y="506.2" width="2.0" height="1.2" fill="#9cdcfe" fill-opacity="0.34"/><rect x="1842.0" y="512.2" width="1.0" height="1.2" fill="#c8c8c8" fill-opacity="0.4"/><rect x="1838.0" y="514.2" width="1.0" height="1.2" fill="#c8c8c8" fill-opacity="0.4"/><rect x="1834.0" y="516.2" width="1.0" height="1.2" fill="#c8c8c8" fill-opacity="0.4"/><rect x="1830.0" y="518.2" width="1.0" height="1.2" fill="#c8c8c8" fill-opacity="0.4"/><rect x="1834.0" y="520.2" width="14.0" height="1.2" fill="#9cdcfe" fill-opacity="0.34"/><rect x="1836.0" y="522.2" width="12.0" height="1.2" fill="#9cdcfe" fill-opacity="0.34"/><rect x="1838.0" y="524.2" width="10.0" height="1.2" fill="#9cdcfe" fill-opacity="0.34"/><rect x="1838.0" y="526.2" width="1.0" height="1.2" fill="#c8c8c8" fill-opacity="0.4"/><rect x="1846.0" y="528.2" width="2.0" height="1.2" fill="#9cdcfe" fill-opacity="0.34"/><rect x="1846.0" y="530.2" width="2.0" height="1.2" fill="#9cdcfe" fill-opacity="0.34"/><rect x="1842.0" y="536.2" width="1.0" height="1.2" fill="#c8c8c8" fill-opacity="0.4"/><rect x="1838.0" y="538.2" width="1.0" height="1.2" fill="#c8c8c8" fill-opacity="0.4"/><rect x="1834.0" y="540.2" width="1.0" height="1.2" fill="#c8c8c8" fill-opacity="0.4"/><rect x="1830.0" y="542.2" width="1.0" height="1.2" fill="#c8c8c8" fill-opacity="0.4"/><rect x="1834.0" y="544.2" width="14.0" height="1.2" fill="#9cdcfe" fill-opacity="0.34"/><rect x="1836.0" y="546.2" width="12.0" height="1.2" fill="#9cdcfe" fill-opacity="0.34"/><rect x="1838.0" y="548.2" width="10.0" height="1.2" fill="#9cdcfe" fill-opacity="0.34"/><rect x="1838.0" y="550.2" width="1.0" height="1.2" fill="#c8c8c8" fill-opacity="0.4"/><rect x="1846.0" y="552.2" width="2.0" height="1.2" fill="#9cdcfe" fill-opacity="0.34"/><rect x="1846.0" y="554.2" width="2.0" height="1.2" fill="#9cdcfe" fill-opacity="0.34"/><rect x="1842.0" y="560.2" width="1.0" height="1.2" fill="#c8c8c8" fill-opacity="0.4"/><rect x="1838.0" y="562.2" width="1.0" height="1.2" fill="#c8c8c8" fill-opacity="0.4"/><rect x="1834.0" y="564.2" width="1.0" height="1.2" fill="#c8c8c8" fill-opacity="0.4"/><rect x="1830.0" y="566.2" width="1.0" height="1.2" fill="#c8c8c8" fill-opacity="0.4"/><rect x="1834.0" y="568.2" width="14.0" height="1.2" fill="#9cdcfe" fill-opacity="0.34"/><rect x="1836.0" y="570.2" width="12.0" height="1.2" fill="#9cdcfe" fill-opacity="0.34"/><rect x="1838.0" y="572.2" width="10.0" height="1.2" fill="#9cdcfe" fill-opacity="0.34"/><rect x="1838.0" y="574.2" width="1.0" height="1.2" fill="#c8c8c8" fill-opacity="0.4"/><rect x="1846.0" y="576.2" width="2.0" height="1.2" fill="#9cdcfe" fill-opacity="0.34"/><rect x="1846.0" y="578.2" width="2.0" height="1.2" fill="#9cdcfe" fill-opacity="0.34"/><rect x="1842.0" y="584.2" width="1.0" height="1.2" fill="#c8c8c8" fill-opacity="0.4"/><rect x="1838.0" y="586.2" width="1.0" height="1.2" fill="#c8c8c8" fill-opacity="0.4"/><rect x="1834.0" y="588.2" width="1.0" height="1.2" fill="#c8c8c8" fill-opacity="0.4"/><rect x="1830.0" y="590.2" width="1.0" height="1.2" fill="#c8c8c8" fill-opacity="0.4"/><rect x="1834.0" y="592.2" width="14.0" height="1.2" fill="#9cdcfe" fill-opacity="0.34"/><rect x="1836.0" y="594.2" width="12.0" height="1.2" fill="#9cdcfe" fill-opacity="0.34"/><rect x="1838.0" y="596.2" width="10.0" height="1.2" fill="#9cdcfe" fill-opacity="0.34"/><rect x="1838.0" y="598.2" width="1.0" height="1.2" fill="#c8c8c8" fill-opacity="0.4"/><rect x="1846.0" y="600.2" width="2.0" height="1.2" fill="#9cdcfe" fill-opacity="0.34"/><rect x="1846.0" y="602.2" width="2.0" height="1.2" fill="#9cdcfe" fill-opacity="0.34"/><rect x="1842.0" y="608.2" width="1.0" height="1.2" fill="#c8c8c8" fill-opacity="0.4"/><rect x="1838.0" y="610.2" width="1.0" height="1.2" fill="#c8c8c8" fill-opacity="0.4"/><rect x="1834.0" y="612.2" width="1.0" height="1.2" fill="#c8c8c8" fill-opacity="0.4"/><rect x="1830.0" y="614.2" width="1.0" height="1.2" fill="#c8c8c8" fill-opacity="0.4"/><rect x="1834.0" y="616.2" width="14.0" height="1.2" fill="#9cdcfe" fill-opacity="0.34"/><rect x="1836.0" y="618.2" width="12.0" height="1.2" fill="#9cdcfe" fill-opacity="0.34"/><rect x="1838.0" y="620.2" width="10.0" height="1.2" fill="#9cdcfe" fill-opacity="0.34"/><rect x="1838.0" y="622.2" width="1.0" height="1.2" fill="#c8c8c8" fill-opacity="0.4"/><rect x="1846.0" y="624.2" width="2.0" height="1.2" fill="#9cdcfe" fill-opacity="0.34"/><rect x="1846.0" y="626.2" width="2.0" height="1.2" fill="#9cdcfe" fill-opacity="0.34"/><rect x="1826.0" y="630.2" width="10.0" height="1.2" fill="#9cdcfe" fill-opacity="0.34"/><rect x="1836.0" y="630.2" width="1.0" height="1.2" fill="#c8c8c8" fill-opacity="0.3"/><rect x="1838.0" y="630.2" width="10.0" height="1.2" fill="#ce9178" fill-opacity="0.34"/><rect x="1834.0" y="632.2" width="8.0" height="1.2" fill="#9cdcfe" fill-opacity="0.34"/><rect x="1842.0" y="632.2" width="1.0" height="1.2" fill="#c8c8c8" fill-opacity="0.3"/><rect x="1844.0" y="632.2" width="4.0" height="1.2" fill="#ce9178" fill-opacity="0.34"/><rect x="1836.0" y="634.2" width="8.0" height="1.2" fill="#9cdcfe" fill-opacity="0.34"/><rect x="1844.0" y="634.2" width="1.0" height="1.2" fill="#c8c8c8" fill-opacity="0.3"/><rect x="1846.0" y="634.2" width="2.0" height="1.2" fill="#ce9178" fill-opacity="0.34"/><rect x="1838.0" y="636.2" width="8.0" height="1.2" fill="#9cdcfe" fill-opacity="0.34"/><rect x="1846.0" y="636.2" width="1.0" height="1.2" fill="#c8c8c8" fill-opacity="0.3"/><rect x="1834.0" y="638.2" width="8.0" height="1.2" fill="#9cdcfe" fill-opacity="0.34"/><rect x="1842.0" y="638.2" width="1.0" height="1.2" fill="#c8c8c8" fill-opacity="0.3"/><rect x="1844.0" y="638.2" width="4.0" height="1.2" fill="#ce9178" fill-opacity="0.34"/><rect x="1836.0" y="640.2" width="8.0" height="1.2" fill="#9cdcfe" fill-opacity="0.34"/><rect x="1844.0" y="640.2" width="1.0" height="1.2" fill="#c8c8c8" fill-opacity="0.3"/><rect x="1846.0" y="640.2" width="2.0" height="1.2" fill="#ce9178" fill-opacity="0.34"/><rect x="1838.0" y="642.2" width="8.0" height="1.2" fill="#9cdcfe" fill-opacity="0.34"/><rect x="1846.0" y="642.2" width="1.0" height="1.2" fill="#c8c8c8" fill-opacity="0.3"/><rect x="1834.0" y="644.2" width="8.0" height="1.2" fill="#9cdcfe" fill-opacity="0.34"/><rect x="1842.0" y="644.2" width="1.0" height="1.2" fill="#c8c8c8" fill-opacity="0.3"/><rect x="1844.0" y="644.2" width="4.0" height="1.2" fill="#ce9178" fill-opacity="0.34"/><rect x="1836.0" y="646.2" width="8.0" height="1.2" fill="#9cdcfe" fill-opacity="0.34"/><rect x="1844.0" y="646.2" width="1.0" height="1.2" fill="#c8c8c8" fill-opacity="0.3"/><rect x="1846.0" y="646.2" width="2.0" height="1.2" fill="#ce9178" fill-opacity="0.34"/><rect x="1834.0" y="650.2" width="1.0" height="1.2" fill="#c8c8c8" fill-opacity="0.4"/><rect x="1830.0" y="652.2" width="1.0" height="1.2" fill="#c8c8c8" fill-opacity="0.4"/><rect x="1826.0" y="654.2" width="1.0" height="1.2" fill="#c8c8c8" fill-opacity="0.4"/><rect x="1818.0" y="656.2" width="30.0" height="1.2" fill="#9cdcfe" fill-opacity="0.34"/><rect x="1818.0" y="660.2" width="14.0" height="1.2" fill="#9cdcfe" fill-opacity="0.34"/><rect x="1832.0" y="660.2" width="1.0" height="1.2" fill="#c8c8c8" fill-opacity="0.3"/><rect x="1834.0" y="660.2" width="8.0" height="1.2" fill="#ce9178" fill-opacity="0.34"/><rect x="1824.0" y="664.2" width="8.0" height="1.2" fill="#9cdcfe" fill-opacity="0.34"/><rect x="1824.0" y="668.2" width="8.0" height="1.2" fill="#9cdcfe" fill-opacity="0.34"/><rect x="1830.0" y="672.2" width="8.0" height="1.2" fill="#9cdcfe" fill-opacity="0.34"/><rect x="1838.0" y="672.2" width="1.0" height="1.2" fill="#c8c8c8" fill-opacity="0.3"/><rect x="1840.0" y="672.2" width="8.0" height="1.2" fill="#ce9178" fill-opacity="0.34"/><rect x="1830.0" y="674.2" width="8.0" height="1.2" fill="#9cdcfe" fill-opacity="0.34"/><rect x="1838.0" y="674.2" width="1.0" height="1.2" fill="#c8c8c8" fill-opacity="0.3"/><rect x="1840.0" y="674.2" width="8.0" height="1.2" fill="#ce9178" fill-opacity="0.34"/><rect x="1830.0" y="676.2" width="8.0" height="1.2" fill="#9cdcfe" fill-opacity="0.34"/><rect x="1838.0" y="676.2" width="1.0" height="1.2" fill="#c8c8c8" fill-opacity="0.3"/><rect x="1840.0" y="676.2" width="8.0" height="1.2" fill="#ce9178" fill-opacity="0.34"/><rect x="1826.0" y="680.2" width="1.0" height="1.2" fill="#c8c8c8" fill-opacity="0.4"/><rect x="1822.0" y="684.2" width="1.0" height="1.2" fill="#c8c8c8" fill-opacity="0.4"/><rect x="1818.0" y="688.2" width="14.0" height="1.2" fill="#9cdcfe" fill-opacity="0.34"/><rect x="1832.0" y="688.2" width="1.0" height="1.2" fill="#c8c8c8" fill-opacity="0.3"/><rect x="1834.0" y="688.2" width="8.0" height="1.2" fill="#ce9178" fill-opacity="0.34"/><rect x="1824.0" y="692.2" width="8.0" height="1.2" fill="#9cdcfe" fill-opacity="0.34"/><rect x="1830.0" y="696.2" width="8.0" height="1.2" fill="#9cdcfe" fill-opacity="0.34"/><rect x="1838.0" y="696.2" width="1.0" height="1.2" fill="#c8c8c8" fill-opacity="0.3"/><rect x="1840.0" y="696.2" width="8.0" height="1.2" fill="#ce9178" fill-opacity="0.34"/><rect x="1834.0" y="700.2" width="2.0" height="1.2" fill="#b5cea8" fill-opacity="0.34"/><rect x="1826.0" y="704.2" width="1.0" height="1.2" fill="#c8c8c8" fill-opacity="0.4"/><rect x="1822.0" y="708.2" width="1.0" height="1.2" fill="#c8c8c8" fill-opacity="0.4"/><rect x="1818.0" y="712.2" width="10.0" height="1.2" fill="#9cdcfe" fill-opacity="0.34"/><rect x="1828.0" y="712.2" width="1.0" height="1.2" fill="#c8c8c8" fill-opacity="0.3"/><rect x="1830.0" y="712.2" width="8.0" height="1.2" fill="#ce9178" fill-opacity="0.34"/><rect x="1840.0" y="712.2" width="4.0" height="1.2" fill="#569cd6" fill-opacity="0.34"/><rect x="1818.0" y="720.2" width="22.0" height="1.2" fill="#9cdcfe" fill-opacity="0.34"/><rect x="1840.0" y="720.2" width="1.0" height="1.2" fill="#c8c8c8" fill-opacity="0.3"/><rect x="1842.0" y="720.2" width="6.0" height="1.2" fill="#ce9178" fill-opacity="0.34"/><rect x="1824.0" y="722.2" width="8.0" height="1.2" fill="#9cdcfe" fill-opacity="0.34"/><rect x="1834.0" y="722.2" width="4.0" height="1.2" fill="#569cd6" fill-opacity="0.34"/><rect x="1814.0" y="728.2" width="1.0" height="1.2" fill="#c8c8c8" fill-opacity="0.4"/><rect x="1810.0" y="732.2" width="14.0" height="1.2" fill="#9cdcfe" fill-opacity="0.34"/><rect x="1826.0" y="732.2" width="1.0" height="1.2" fill="#c8c8c8" fill-opacity="0.4"/><rect x="1816.0" y="736.2" width="10.0" height="1.2" fill="#9cdcfe" fill-opacity="0.34"/><rect x="1822.0" y="740.2" width="10.0" height="1.2" fill="#9cdcfe" fill-opacity="0.34"/><rect x="1832.0" y="740.2" width="1.0" height="1.2" fill="#c8c8c8" fill-opacity="0.3"/><rect x="1834.0" y="740.2" width="12.0" height="1.2" fill="#ce9178" fill-opacity="0.34"/><rect x="1814.0" y="744.2" width="1.0" height="1.2" fill="#c8c8c8" fill-opacity="0.4"/><rect x="1814.0" y="748.2" width="1.0" height="1.2" fill="#c8c8c8" fill-opacity="0.4"/><rect x="1814.0" y="752.2" width="17.0" height="1.2" fill="#9cdcfe" fill-opacity="0.34"/><rect x="1833.0" y="752.2" width="1.0" height="1.2" fill="#c8c8c8" fill-opacity="0.4"/><rect x="1818.0" y="756.2" width="10.0" height="1.2" fill="#9cdcfe" fill-opacity="0.34"/><rect x="1822.0" y="760.2" width="10.0" height="1.2" fill="#9cdcfe" fill-opacity="0.34"/><rect x="1832.0" y="760.2" width="1.0" height="1.2" fill="#c8c8c8" fill-opacity="0.3"/><rect x="1834.0" y="760.2" width="12.0" height="1.2" fill="#ce9178" fill-opacity="0.34"/><rect x="1818.0" y="764.2" width="1.0" height="1.2" fill="#c8c8c8" fill-opacity="0.4"/><rect x="1814.0" y="768.2" width="1.0" height="1.2" fill="#c8c8c8" fill-opacity="0.4"/><rect x="1814.0" y="772.2" width="20.0" height="1.2" fill="#9cdcfe" fill-opacity="0.34"/><rect x="1836.0" y="772.2" width="1.0" height="1.2" fill="#c8c8c8" fill-opacity="0.4"/><rect x="1818.0" y="776.2" width="10.0" height="1.2" fill="#9cdcfe" fill-opacity="0.34"/><rect x="1828.0" y="776.2" width="1.0" height="1.2" fill="#c8c8c8" fill-opacity="0.3"/><rect x="1830.0" y="776.2" width="18.0" height="1.2" fill="#ce9178" fill-opacity="0.34"/><rect x="1826.0" y="780.2" width="8.0" height="1.2" fill="#9cdcfe" fill-opacity="0.34"/><rect x="1834.0" y="780.2" width="1.0" height="1.2" fill="#c8c8c8" fill-opacity="0.3"/><rect x="1836.0" y="780.2" width="6.0" height="1.2" fill="#ce9178" fill-opacity="0.34"/><rect x="1814.0" y="784.2" width="1.0" height="1.2" fill="#c8c8c8" fill-opacity="0.4"/><rect x="1814.0" y="788.2" width="20.0" height="1.2" fill="#9cdcfe" fill-opacity="0.34"/><rect x="1836.0" y="788.2" width="1.0" height="1.2" fill="#c8c8c8" fill-opacity="0.4"/><rect x="1818.0" y="792.2" width="10.0" height="1.2" fill="#9cdcfe" fill-opacity="0.34"/><rect x="1828.0" y="792.2" width="1.0" height="1.2" fill="#c8c8c8" fill-opacity="0.3"/><rect x="1830.0" y="792.2" width="14.0" height="1.2" fill="#ce9178" fill-opacity="0.34"/><rect x="1814.0" y="796.2" width="1.0" height="1.2" fill="#c8c8c8" fill-opacity="0.4"/><rect x="1826.0" y="800.2" width="10.0" height="1.2" fill="#9cdcfe" fill-opacity="0.34"/><rect x="1836.0" y="800.2" width="1.0" height="1.2" fill="#c8c8c8" fill-opacity="0.3"/><rect x="1838.0" y="800.2" width="10.0" height="1.2" fill="#ce9178" fill-opacity="0.34"/><rect x="1822.0" y="804.2" width="1.0" height="1.2" fill="#c8c8c8" fill-opacity="0.4"/><rect x="1818.0" y="808.2" width="1.0" height="1.2" fill="#c8c8c8" fill-opacity="0.4"/><rect x="1810.0" y="808.2" width="1.0" height="1.2" fill="#c8c8c8" fill-opacity="0.4"/><rect x="1810.0" y="812.2" width="18.0" height="1.2" fill="#9cdcfe" fill-opacity="0.34"/><rect x="1830.0" y="812.2" width="1.0" height="1.2" fill="#c8c8c8" fill-opacity="0.4"/><rect x="1818.0" y="816.2" width="8.0" height="1.2" fill="#9cdcfe" fill-opacity="0.34"/><rect x="1826.0" y="816.2" width="1.0" height="1.2" fill="#c8c8c8" fill-opacity="0.3"/><rect x="1828.0" y="816.2" width="20.0" height="1.2" fill="#ce9178" fill-opacity="0.34"/><rect x="1818.0" y="816.2" width="8.0" height="1.2" fill="#9cdcfe" fill-opacity="0.34"/><rect x="1826.0" y="816.2" width="1.0" height="1.2" fill="#c8c8c8" fill-opacity="0.3"/><rect x="1828.0" y="816.2" width="20.0" height="1.2" fill="#ce9178" fill-opacity="0.34"/><rect x="1818.0" y="820.2" width="8.0" height="1.2" fill="#9cdcfe" fill-opacity="0.34"/><rect x="1826.0" y="820.2" width="1.0" height="1.2" fill="#c8c8c8" fill-opacity="0.3"/><rect x="1828.0" y="820.2" width="20.0" height="1.2" fill="#ce9178" fill-opacity="0.34"/><rect x="1818.0" y="820.2" width="8.0" height="1.2" fill="#9cdcfe" fill-opacity="0.34"/><rect x="1826.0" y="820.2" width="1.0" height="1.2" fill="#c8c8c8" fill-opacity="0.3"/><rect x="1828.0" y="820.2" width="20.0" height="1.2" fill="#ce9178" fill-opacity="0.34"/><rect x="1818.0" y="824.2" width="8.0" height="1.2" fill="#9cdcfe" fill-opacity="0.34"/><rect x="1826.0" y="824.2" width="1.0" height="1.2" fill="#c8c8c8" fill-opacity="0.3"/><rect x="1828.0" y="824.2" width="20.0" height="1.2" fill="#ce9178" fill-opacity="0.34"/><rect x="1818.0" y="824.2" width="8.0" height="1.2" fill="#9cdcfe" fill-opacity="0.34"/><rect x="1826.0" y="824.2" width="1.0" height="1.2" fill="#c8c8c8" fill-opacity="0.3"/><rect x="1828.0" y="824.2" width="20.0" height="1.2" fill="#ce9178" fill-opacity="0.34"/><rect x="1822.0" y="828.2" width="6.0" height="1.2" fill="#9cdcfe" fill-opacity="0.34"/><rect x="1828.0" y="828.2" width="1.0" height="1.2" fill="#c8c8c8" fill-opacity="0.3"/><rect x="1830.0" y="828.2" width="18.0" height="1.2" fill="#ce9178" fill-opacity="0.34"/><rect x="1826.0" y="830.2" width="12.0" height="1.2" fill="#9cdcfe" fill-opacity="0.34"/><rect x="1826.0" y="834.2" width="4.0" height="1.2" fill="#569cd6" fill-opacity="0.34"/><rect x="1818.0" y="836.2" width="14.0" height="1.2" fill="#9cdcfe" fill-opacity="0.34"/><rect x="1832.0" y="836.2" width="1.0" height="1.2" fill="#c8c8c8" fill-opacity="0.3"/><rect x="1834.0" y="836.2" width="6.0" height="1.2" fill="#ce9178" fill-opacity="0.34"/><rect x="1822.0" y="838.2" width="8.0" height="1.2" fill="#9cdcfe" fill-opacity="0.34"/><rect x="1830.0" y="838.2" width="1.0" height="1.2" fill="#c8c8c8" fill-opacity="0.3"/><rect x="1832.0" y="838.2" width="6.0" height="1.2" fill="#ce9178" fill-opacity="0.34"/><rect x="1818.0" y="840.2" width="1.0" height="1.2" fill="#c8c8c8" fill-opacity="0.4"/><rect x="1814.0" y="842.2" width="1.0" height="1.2" fill="#c8c8c8" fill-opacity="0.4"/><rect x="1822.0" y="846.2" width="10.0" height="1.2" fill="#9cdcfe" fill-opacity="0.34"/><rect x="1832.0" y="846.2" width="1.0" height="1.2" fill="#c8c8c8" fill-opacity="0.3"/><rect x="1834.0" y="846.2" width="14.0" height="1.2" fill="#ce9178" fill-opacity="0.34"/><rect x="1822.0" y="848.2" width="14.0" height="1.2" fill="#9cdcfe" fill-opacity="0.34"/><rect x="1836.0" y="848.2" width="1.0" height="1.2" fill="#c8c8c8" fill-opacity="0.3"/><rect x="1838.0" y="848.2" width="10.0" height="1.2" fill="#ce9178" fill-opacity="0.34"/><rect x="1822.0" y="850.2" width="8.0" height="1.2" fill="#9cdcfe" fill-opacity="0.34"/><rect x="1830.0" y="850.2" width="1.0" height="1.2" fill="#c8c8c8" fill-opacity="0.3"/><rect x="1832.0" y="850.2" width="10.0" height="1.2" fill="#ce9178" fill-opacity="0.34"/><rect x="1822.0" y="852.2" width="8.0" height="1.2" fill="#9cdcfe" fill-opacity="0.34"/><rect x="1832.0" y="852.2" width="1.0" height="1.2" fill="#c8c8c8" fill-opacity="0.4"/><rect x="1826.0" y="854.2" width="22.0" height="1.2" fill="#ce9178" fill-opacity="0.34"/><rect x="1822.0" y="856.2" width="1.0" height="1.2" fill="#c8c8c8" fill-opacity="0.4"/><rect x="1830.0" y="858.2" width="18.0" height="1.2" fill="#9cdcfe" fill-opacity="0.34"/><rect x="1826.0" y="860.2" width="1.0" height="1.2" fill="#c8c8c8" fill-opacity="0.4"/><rect x="1826.0" y="862.2" width="4.0" height="1.2" fill="#569cd6" fill-opacity="0.34"/><rect x="1818.0" y="864.2" width="1.0" height="1.2" fill="#c8c8c8" fill-opacity="0.4"/><rect x="1818.0" y="866.2" width="16.0" height="1.2" fill="#9cdcfe" fill-opacity="0.34"/><rect x="1836.0" y="866.2" width="1.0" height="1.2" fill="#c8c8c8" fill-opacity="0.4"/><rect x="1822.0" y="868.2" width="8.0" height="1.2" fill="#9cdcfe" fill-opacity="0.34"/><rect x="1830.0" y="868.2" width="1.0" height="1.2" fill="#c8c8c8" fill-opacity="0.3"/><rect x="1832.0" y="868.2" width="6.0" height="1.2" fill="#ce9178" fill-opacity="0.34"/><rect x="1818.0" y="870.2" width="1.0" height="1.2" fill="#c8c8c8" fill-opacity="0.4"/><rect x="1814.0" y="872.2" width="1.0" height="1.2" fill="#c8c8c8" fill-opacity="0.4"/><rect x="1822.0" y="878.2" width="10.0" height="1.2" fill="#9cdcfe" fill-opacity="0.34"/><rect x="1832.0" y="878.2" width="1.0" height="1.2" fill="#c8c8c8" fill-opacity="0.3"/><rect x="1834.0" y="878.2" width="14.0" height="1.2" fill="#ce9178" fill-opacity="0.34"/><rect x="1822.0" y="880.2" width="14.0" height="1.2" fill="#9cdcfe" fill-opacity="0.34"/><rect x="1836.0" y="880.2" width="1.0" height="1.2" fill="#c8c8c8" fill-opacity="0.3"/><rect x="1838.0" y="880.2" width="10.0" height="1.2" fill="#ce9178" fill-opacity="0.34"/><rect x="1822.0" y="882.2" width="8.0" height="1.2" fill="#9cdcfe" fill-opacity="0.34"/><rect x="1830.0" y="882.2" width="1.0" height="1.2" fill="#c8c8c8" fill-opacity="0.3"/><rect x="1832.0" y="882.2" width="10.0" height="1.2" fill="#ce9178" fill-opacity="0.34"/><rect x="1822.0" y="884.2" width="8.0" height="1.2" fill="#9cdcfe" fill-opacity="0.34"/><rect x="1832.0" y="884.2" width="1.0" height="1.2" fill="#c8c8c8" fill-opacity="0.4"/><rect x="1826.0" y="886.2" width="22.0" height="1.2" fill="#ce9178" fill-opacity="0.34"/><rect x="1822.0" y="888.2" width="1.0" height="1.2" fill="#c8c8c8" fill-opacity="0.4"/><rect x="1830.0" y="890.2" width="18.0" height="1.2" fill="#9cdcfe" fill-opacity="0.34"/><rect x="1826.0" y="892.2" width="1.0" height="1.2" fill="#c8c8c8" fill-opacity="0.4"/><rect x="1826.0" y="894.2" width="4.0" height="1.2" fill="#569cd6" fill-opacity="0.34"/><rect x="1818.0" y="896.2" width="1.0" height="1.2" fill="#c8c8c8" fill-opacity="0.4"/><rect x="1818.0" y="898.2" width="16.0" height="1.2" fill="#9cdcfe" fill-opacity="0.34"/><rect x="1836.0" y="898.2" width="1.0" height="1.2" fill="#c8c8c8" fill-opacity="0.4"/><rect x="1822.0" y="900.2" width="8.0" height="1.2" fill="#9cdcfe" fill-opacity="0.34"/><rect x="1830.0" y="900.2" width="1.0" height="1.2" fill="#c8c8c8" fill-opacity="0.3"/><rect x="1832.0" y="900.2" width="6.0" height="1.2" fill="#ce9178" fill-opacity="0.34"/><rect x="1818.0" y="902.2" width="1.0" height="1.2" fill="#c8c8c8" fill-opacity="0.4"/><rect x="1814.0" y="904.2" width="1.0" height="1.2" fill="#c8c8c8" fill-opacity="0.4"/><rect x="1822.0" y="910.2" width="10.0" height="1.2" fill="#9cdcfe" fill-opacity="0.34"/><rect x="1832.0" y="910.2" width="1.0" height="1.2" fill="#c8c8c8" fill-opacity="0.3"/><rect x="1834.0" y="910.2" width="14.0" height="1.2" fill="#ce9178" fill-opacity="0.34"/><rect x="1822.0" y="912.2" width="14.0" height="1.2" fill="#9cdcfe" fill-opacity="0.34"/><rect x="1836.0" y="912.2" width="1.0" height="1.2" fill="#c8c8c8" fill-opacity="0.3"/><rect x="1838.0" y="912.2" width="10.0" height="1.2" fill="#ce9178" fill-opacity="0.34"/><rect x="1822.0" y="914.2" width="8.0" height="1.2" fill="#9cdcfe" fill-opacity="0.34"/><rect x="1830.0" y="914.2" width="1.0" height="1.2" fill="#c8c8c8" fill-opacity="0.3"/><rect x="1832.0" y="914.2" width="10.0" height="1.2" fill="#ce9178" fill-opacity="0.34"/><rect x="1822.0" y="916.2" width="8.0" height="1.2" fill="#9cdcfe" fill-opacity="0.34"/><rect x="1832.0" y="916.2" width="1.0" height="1.2" fill="#c8c8c8" fill-opacity="0.4"/><rect x="1826.0" y="918.2" width="22.0" height="1.2" fill="#ce9178" fill-opacity="0.34"/><rect x="1822.0" y="920.2" width="1.0" height="1.2" fill="#c8c8c8" fill-opacity="0.4"/><rect x="1830.0" y="922.2" width="18.0" height="1.2" fill="#9cdcfe" fill-opacity="0.34"/><rect x="1826.0" y="924.2" width="1.0" height="1.2" fill="#c8c8c8" fill-opacity="0.4"/><rect x="1826.0" y="926.2" width="4.0" height="1.2" fill="#569cd6" fill-opacity="0.34"/><rect x="1818.0" y="928.2" width="1.0" height="1.2" fill="#c8c8c8" fill-opacity="0.4"/><rect x="1818.0" y="930.2" width="16.0" height="1.2" fill="#9cdcfe" fill-opacity="0.34"/><rect x="1836.0" y="930.2" width="1.0" height="1.2" fill="#c8c8c8" fill-opacity="0.4"/><rect x="1822.0" y="932.2" width="8.0" height="1.2" fill="#9cdcfe" fill-opacity="0.34"/><rect x="1830.0" y="932.2" width="1.0" height="1.2" fill="#c8c8c8" fill-opacity="0.3"/><rect x="1832.0" y="932.2" width="6.0" height="1.2" fill="#ce9178" fill-opacity="0.34"/><rect x="1818.0" y="934.2" width="1.0" height="1.2" fill="#c8c8c8" fill-opacity="0.4"/><rect x="1814.0" y="936.2" width="1.0" height="1.2" fill="#c8c8c8" fill-opacity="0.4"/><rect x="1822.0" y="942.2" width="10.0" height="1.2" fill="#9cdcfe" fill-opacity="0.34"/><rect x="1832.0" y="942.2" width="1.0" height="1.2" fill="#c8c8c8" fill-opacity="0.3"/><rect x="1834.0" y="942.2" width="14.0" height="1.2" fill="#ce9178" fill-opacity="0.34"/><rect x="1822.0" y="944.2" width="14.0" height="1.2" fill="#9cdcfe" fill-opacity="0.34"/><rect x="1836.0" y="944.2" width="1.0" height="1.2" fill="#c8c8c8" fill-opacity="0.3"/><rect x="1838.0" y="944.2" width="10.0" height="1.2" fill="#ce9178" fill-opacity="0.34"/><rect x="1822.0" y="946.2" width="8.0" height="1.2" fill="#9cdcfe" fill-opacity="0.34"/><rect x="1830.0" y="946.2" width="1.0" height="1.2" fill="#c8c8c8" fill-opacity="0.3"/><rect x="1832.0" y="946.2" width="10.0" height="1.2" fill="#ce9178" fill-opacity="0.34"/><rect x="1822.0" y="948.2" width="8.0" height="1.2" fill="#9cdcfe" fill-opacity="0.34"/><rect x="1832.0" y="948.2" width="1.0" height="1.2" fill="#c8c8c8" fill-opacity="0.4"/><rect x="1826.0" y="950.2" width="22.0" height="1.2" fill="#ce9178" fill-opacity="0.34"/><rect x="1822.0" y="952.2" width="1.0" height="1.2" fill="#c8c8c8" fill-opacity="0.4"/><rect x="1830.0" y="954.2" width="18.0" height="1.2" fill="#9cdcfe" fill-opacity="0.34"/><rect x="1826.0" y="956.2" width="1.0" height="1.2" fill="#c8c8c8" fill-opacity="0.4"/><rect x="1826.0" y="958.2" width="4.0" height="1.2" fill="#569cd6" fill-opacity="0.34"/><rect x="1818.0" y="960.2" width="1.0" height="1.2" fill="#c8c8c8" fill-opacity="0.4"/><rect x="1818.0" y="962.2" width="16.0" height="1.2" fill="#9cdcfe" fill-opacity="0.34"/><rect x="1836.0" y="962.2" width="1.0" height="1.2" fill="#c8c8c8" fill-opacity="0.4"/><rect x="1822.0" y="964.2" width="8.0" height="1.2" fill="#9cdcfe" fill-opacity="0.34"/><rect x="1830.0" y="964.2" width="1.0" height="1.2" fill="#c8c8c8" fill-opacity="0.3"/><rect x="1832.0" y="964.2" width="6.0" height="1.2" fill="#ce9178" fill-opacity="0.34"/><rect x="1818.0" y="966.2" width="1.0" height="1.2" fill="#c8c8c8" fill-opacity="0.4"/><rect x="1814.0" y="968.2" width="1.0" height="1.2" fill="#c8c8c8" fill-opacity="0.4"/></svg>
</body></html>
